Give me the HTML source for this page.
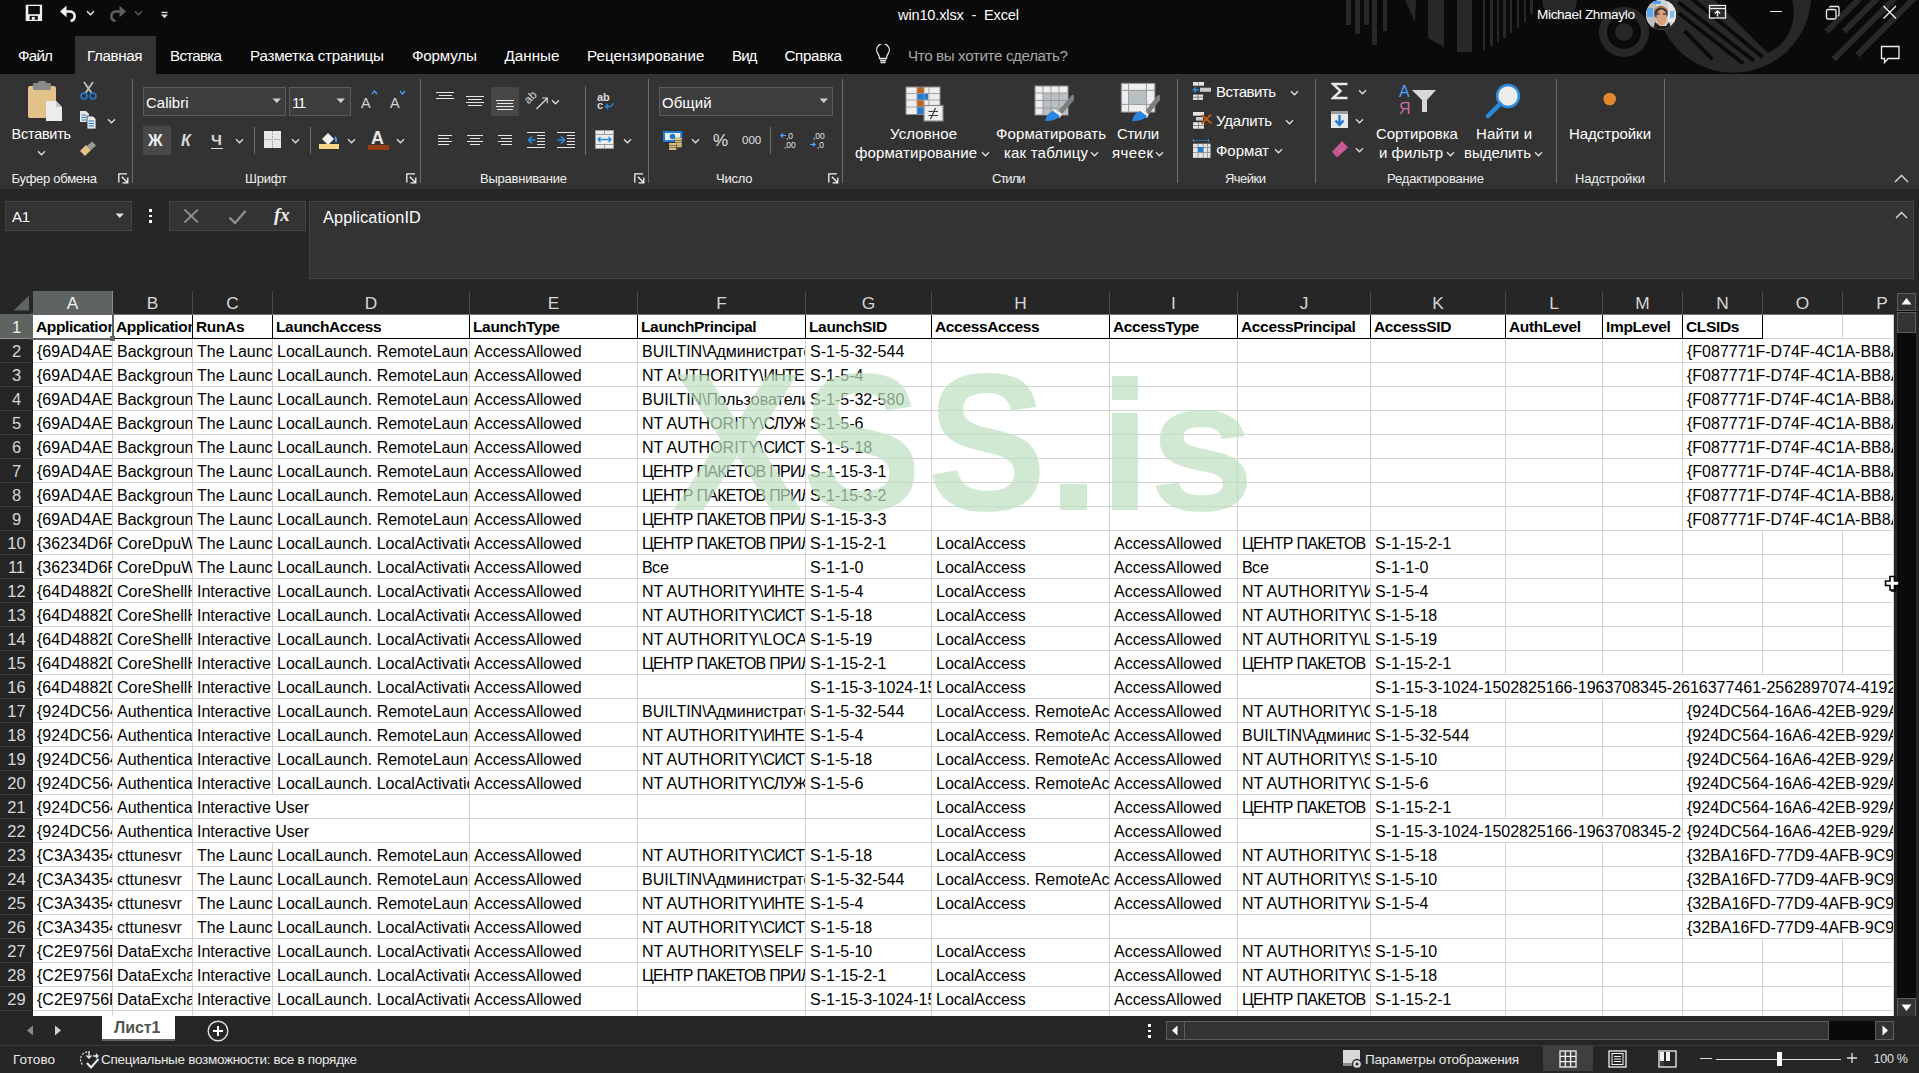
<!DOCTYPE html><html><head><meta charset="utf-8"><style>
html,body{margin:0;padding:0;width:1919px;height:1073px;overflow:hidden;background:#262626;}
body{position:relative;font-family:"Liberation Sans",sans-serif;}
.r{position:absolute;display:block;}
.t{position:absolute;white-space:pre;}
.c{position:absolute;overflow:hidden;white-space:pre;background:#fff;}
.cn{position:absolute;top:4.5px;font-size:16px;line-height:16px;color:#000;}
.cn i{font-style:normal;letter-spacing:-0.75px;}
.cb{position:absolute;top:4px;font-size:15.5px;line-height:16px;color:#000;font-weight:700;letter-spacing:-0.35px;}
</style></head><body><div class="r" style="left:0px;top:0px;width:1919px;height:74px;background:#0a0a0a;"></div><svg class="r" style="left:1330px;top:0px;" width="589" height="74" viewBox="0 0 589 74"><rect x="16" y="0" width="5" height="25" fill="#282828"/><rect x="25" y="0" width="5" height="34" fill="#282828"/><rect x="34" y="0" width="5" height="25" fill="#282828"/><rect x="42" y="0" width="5" height="45" fill="#282828"/><rect x="53" y="0" width="4" height="31" fill="#282828"/><rect x="127" y="0" width="15" height="52" fill="#282828"/><rect x="153" y="0" width="2" height="50" fill="#282828"/><rect x="160" y="0" width="3" height="46" fill="#282828"/><rect x="167" y="0" width="2" height="42" fill="#282828"/><rect x="173" y="0" width="3" height="38" fill="#282828"/><rect x="180" y="0" width="2" height="33" fill="#282828"/><rect x="187" y="0" width="2" height="28" fill="#282828"/><rect x="194" y="0" width="2" height="22" fill="#282828"/><rect x="200" y="0" width="3" height="14" fill="#282828"/><path d="M75 0 L86 0 L85 22 Z" fill="#282828"/><path d="M98 0 L114 0 L114 47 L98 38 Z" fill="#282828"/><path d="M212 0 L247 0 Q245 20 230 20 Q214 20 212 0 Z" fill="#282828"/><circle cx="294" cy="32" r="21" fill="none" stroke="#282828" stroke-width="8"/><circle cx="294" cy="32" r="9" fill="#282828"/><defs><clipPath id="holec"><path d="M370.29999999999995 -14.1 L620 -14.1 L620 84.7 L469.5 84.7 Z"/></clipPath></defs><circle cx="403.4000000000001" cy="-5.1" r="77.8" fill="#282828"/><circle cx="419.70000000000005" cy="12.7" r="44.2" fill="#0a0a0a" clip-path="url(#holec)"/><path d="M363.5999999999999 0 L432.79999999999995 57.3" stroke="#0a0a0a" stroke-width="3.8"/><path d="M348.20000000000005 2.1 L423.70000000000005 60.8" stroke="#0a0a0a" stroke-width="3.8"/><path d="M348.9000000000001 13.3 L413.20000000000005 63.6" stroke="#0a0a0a" stroke-width="3.8"/><path d="M354.5 30.8 L382.4000000000001 59.4" stroke="#0a0a0a" stroke-width="3.8"/><path d="M343.5999999999999 -16.6 L363.5999999999999 0" stroke="#0a0a0a" stroke-width="3.8"/><path d="M496.5999999999999 31.5 L586.5999999999999 -58.5" stroke="#282828" stroke-width="6"/><path d="M514 31.5 L604 -58.5" stroke="#282828" stroke-width="6"/><path d="M503.5999999999999 59.4 L593.5999999999999 -30.6" stroke="#282828" stroke-width="6"/><path d="M527.3 55.2 L617.3 -34.8" stroke="#282828" stroke-width="6"/></svg><svg class="r" style="left:24px;top:3px;" width="20" height="20" viewBox="0 0 20 20"><rect x="1.7" y="1.7" width="16.4" height="16.3" fill="#f0f0f0"/><rect x="4.3" y="3" width="11.5" height="8.2" fill="#0a0a0a"/><rect x="5.6" y="12.9" width="8.2" height="3.9" fill="#0a0a0a"/><rect x="7.8" y="13.9" width="3" height="2.9" fill="#f0f0f0"/></svg><svg class="r" style="left:58px;top:4px;" width="22" height="18" viewBox="0 0 22 18"><path d="M6 7.5 H12.5 A4.8 4.8 0 0 1 12.5 17" fill="none" stroke="#f0f0f0" stroke-width="2.6"/><path d="M2 7.5 L8.5 1.8 L8.5 13.2 Z" fill="#f0f0f0"/></svg><svg class="r" style="left:85.5px;top:8.5px;" width="9.0" height="7.0" viewBox="0 0 9.0 7.0"><path d="M1 2.25 L4.5 5.75 L8.0 2.25" fill="none" stroke="#f0f0f0" stroke-width="1.3"/></svg><svg class="r" style="left:106px;top:4px;" width="22" height="18" viewBox="0 0 22 18"><path d="M16 7.5 H9.5 A4.8 4.8 0 0 0 9.5 17" fill="none" stroke="#5e5e5e" stroke-width="2.6"/><path d="M20 7.5 L13.5 1.8 L13.5 13.2 Z" fill="#5e5e5e"/></svg><svg class="r" style="left:133.5px;top:8.5px;" width="9.0" height="7.0" viewBox="0 0 9.0 7.0"><path d="M1 2.25 L4.5 5.75 L8.0 2.25" fill="none" stroke="#5e5e5e" stroke-width="1.3"/></svg><svg class="r" style="left:160px;top:11px;" width="9" height="9" viewBox="0 0 9 9"><rect x="1.5" y="0.8" width="6" height="1.3" fill="#e0e0e0"/><path d="M1 3.5 H8 L4.5 7.3 Z" fill="#e0e0e0"/></svg><div class="t" style="left:898.0px;top:7.6px;font-size:14.6px;line-height:14.6px;color:#ffffff;letter-spacing:-0.16px;">win10.xlsx  -  Excel</div><div class="t" style="left:1537.0px;top:8.0px;font-size:13.6px;line-height:13.6px;color:#ffffff;letter-spacing:-0.34px;">Michael Zhmaylo</div><svg class="r" style="left:1646px;top:0px;" width="31" height="30" viewBox="0 0 31 30"><defs><clipPath id="av"><circle cx="15" cy="14.7" r="15"/></clipPath></defs><g clip-path="url(#av)"><rect width="31" height="30" fill="#d2d2d2"/><rect x="0" y="0" width="10" height="30" fill="#bdbdbd"/><rect x="22" y="2" width="9" height="20" fill="#e6e6e6"/><rect x="1" y="8" width="6" height="9" fill="#5aa9ef"/><rect x="7" y="1" width="8" height="3" fill="#4aa3ff"/><rect x="24" y="11" width="4" height="7" fill="#7cc0f5"/><path d="M7 30 L9 22 L14 26 L20 26 L23 22 L26 30 Z" fill="#1e1e1e"/><ellipse cx="15" cy="13" rx="6.8" ry="7" fill="#3c3a3a"/><path d="M8.5 10 Q15 3.5 21.5 10" fill="none" stroke="#c07a3a" stroke-width="1.2"/><ellipse cx="15.5" cy="17.5" rx="5.2" ry="8" fill="#d7a27c"/><path d="M10.5 14 H13.5 M17 14 H20" stroke="#5a3a4a" stroke-width="1.4"/></g></svg><svg class="r" style="left:1708px;top:4px;" width="20" height="16" viewBox="0 0 20 16"><rect x="1.5" y="1.5" width="16" height="12.5" fill="none" stroke="#f0f0f0" stroke-width="1.3"/><path d="M1.5 4.5 H17.5" stroke="#f0f0f0" stroke-width="1.3"/><path d="M9.5 12.5 V7 M6.8 9.5 L9.5 6.8 L12.2 9.5" fill="none" stroke="#f0f0f0" stroke-width="1.3"/></svg><div class="r" style="left:1770px;top:11px;width:12px;height:1.2px;background:#f0f0f0;"></div><svg class="r" style="left:1825px;top:5px;" width="16" height="15" viewBox="0 0 16 15"><rect x="1.5" y="4.5" width="9.5" height="9.5" rx="1.5" fill="none" stroke="#f0f0f0" stroke-width="1.3"/><path d="M4.5 2.5 Q4.5 1.5 6 1.5 H12.5 Q14 1.5 14 3 V9.5 Q14 11 12.5 11" fill="none" stroke="#f0f0f0" stroke-width="1.3"/></svg><svg class="r" style="left:1882px;top:5px;" width="16" height="15" viewBox="0 0 16 15"><path d="M1.5 1 L14 13.5 M14 1 L1.5 13.5" stroke="#f0f0f0" stroke-width="1.4"/></svg><svg class="r" style="left:1880px;top:45px;" width="21" height="20" viewBox="0 0 21 20"><path d="M1.5 1.5 H19 V13.5 H8 L4.5 17.5 V13.5 H1.5 Z" fill="none" stroke="#f0f0f0" stroke-width="1.3"/></svg><div class="r" style="left:75px;top:36px;width:81px;height:38px;background:#333333;"></div><div class="t" style="left:18.0px;top:47.8px;font-size:15.2px;line-height:15.2px;color:#ffffff;letter-spacing:-0.79px;">Файл</div><div class="t" style="left:87.0px;top:47.8px;font-size:15.2px;line-height:15.2px;color:#ffffff;letter-spacing:-0.39px;">Главная</div><div class="t" style="left:170.0px;top:47.8px;font-size:15.2px;line-height:15.2px;color:#ffffff;letter-spacing:-0.75px;">Вставка</div><div class="t" style="left:250.0px;top:47.8px;font-size:15.2px;line-height:15.2px;color:#ffffff;letter-spacing:-0.24px;">Разметка страницы</div><div class="t" style="left:412.0px;top:47.8px;font-size:15.2px;line-height:15.2px;color:#ffffff;letter-spacing:-0.19px;">Формулы</div><div class="t" style="left:504.5px;top:47.8px;font-size:15.2px;line-height:15.2px;color:#ffffff;letter-spacing:0.02px;">Данные</div><div class="t" style="left:587.0px;top:47.8px;font-size:15.2px;line-height:15.2px;color:#ffffff;letter-spacing:0.01px;">Рецензирование</div><div class="t" style="left:732.0px;top:47.8px;font-size:15.2px;line-height:15.2px;color:#ffffff;letter-spacing:-1.00px;">Вид</div><div class="t" style="left:784.5px;top:47.8px;font-size:15.2px;line-height:15.2px;color:#ffffff;letter-spacing:-0.35px;">Справка</div><svg class="r" style="left:874px;top:44px;" width="18" height="22" viewBox="0 0 18 22"><path d="M5.5 14.5 Q5.5 11.5 3.8 9.5 A6.3 6.3 0 1 1 14.2 9.5 Q12.5 11.5 12.5 14.5 Z" fill="none" stroke="#e6e6e6" stroke-width="1.3"/><path d="M6 16.5 H12 M6.5 18.5 H11.5" stroke="#e6e6e6" stroke-width="1.3"/></svg><div class="t" style="left:908.0px;top:47.8px;font-size:15.2px;line-height:15.2px;color:#a8a8a8;letter-spacing:-0.38px;">Что вы хотите сделать?</div><div class="r" style="left:0px;top:74px;width:1919px;height:115px;background:#333333;"></div><div class="r" style="left:132px;top:79px;width:1px;height:104px;background:#6a6f6b;"></div><div class="r" style="left:420px;top:79px;width:1px;height:104px;background:#6a6f6b;"></div><div class="r" style="left:648px;top:79px;width:1px;height:104px;background:#6a6f6b;"></div><div class="r" style="left:842px;top:79px;width:1px;height:104px;background:#6a6f6b;"></div><div class="r" style="left:1177px;top:79px;width:1px;height:104px;background:#6a6f6b;"></div><div class="r" style="left:1315px;top:79px;width:1px;height:104px;background:#6a6f6b;"></div><div class="r" style="left:1556px;top:79px;width:1px;height:104px;background:#6a6f6b;"></div><div class="r" style="left:1664px;top:79px;width:1px;height:104px;background:#6a6f6b;"></div><div class="t" style="left:11.6px;top:171.5px;font-size:13px;line-height:13px;color:#efefef;letter-spacing:-0.27px;">Буфер обмена</div><div class="t" style="left:245.0px;top:171.5px;font-size:13px;line-height:13px;color:#efefef;letter-spacing:-0.19px;">Шрифт</div><div class="t" style="left:480.0px;top:171.5px;font-size:13px;line-height:13px;color:#efefef;letter-spacing:-0.23px;">Выравнивание</div><div class="t" style="left:716.0px;top:171.5px;font-size:13px;line-height:13px;color:#efefef;letter-spacing:-0.22px;">Число</div><div class="t" style="left:992.0px;top:171.5px;font-size:13px;line-height:13px;color:#efefef;letter-spacing:-0.99px;">Стили</div><div class="t" style="left:1225.0px;top:171.5px;font-size:13px;line-height:13px;color:#efefef;letter-spacing:-0.52px;">Ячейки</div><div class="t" style="left:1387.0px;top:171.5px;font-size:13px;line-height:13px;color:#efefef;letter-spacing:-0.16px;">Редактирование</div><div class="t" style="left:1575.0px;top:171.5px;font-size:13px;line-height:13px;color:#efefef;letter-spacing:-0.15px;">Надстройки</div><svg class="r" style="left:117px;top:172px;" width="13" height="13" viewBox="0 0 13 13"><path d="M1.8 10.5 V1.8 H10" stroke="#f4f4f4" stroke-width="1.3" fill="none"/><path d="M4.8 4.8 L10.8 10.8 M10.8 5.6 V10.8 H5.6" stroke="#f4f4f4" stroke-width="1.3" fill="none"/></svg><svg class="r" style="left:405px;top:172px;" width="13" height="13" viewBox="0 0 13 13"><path d="M1.8 10.5 V1.8 H10" stroke="#f4f4f4" stroke-width="1.3" fill="none"/><path d="M4.8 4.8 L10.8 10.8 M10.8 5.6 V10.8 H5.6" stroke="#f4f4f4" stroke-width="1.3" fill="none"/></svg><svg class="r" style="left:633px;top:172px;" width="13" height="13" viewBox="0 0 13 13"><path d="M1.8 10.5 V1.8 H10" stroke="#f4f4f4" stroke-width="1.3" fill="none"/><path d="M4.8 4.8 L10.8 10.8 M10.8 5.6 V10.8 H5.6" stroke="#f4f4f4" stroke-width="1.3" fill="none"/></svg><svg class="r" style="left:827px;top:172px;" width="13" height="13" viewBox="0 0 13 13"><path d="M1.8 10.5 V1.8 H10" stroke="#f4f4f4" stroke-width="1.3" fill="none"/><path d="M4.8 4.8 L10.8 10.8 M10.8 5.6 V10.8 H5.6" stroke="#f4f4f4" stroke-width="1.3" fill="none"/></svg><svg class="r" style="left:1894px;top:174px;" width="15" height="9" viewBox="0 0 15 9"><path d="M1 8 L7.5 1.5 L14 8" fill="none" stroke="#e0e0e0" stroke-width="1.3"/></svg><svg class="r" style="left:26px;top:81px;" width="38" height="42" viewBox="0 0 38 42"><rect x="2" y="5" width="28" height="32" rx="2" fill="#e3c28a"/><rect x="7" y="2" width="18" height="7" rx="1.5" fill="#8a8a8a"/><rect x="12" y="0" width="8" height="4" rx="1.5" fill="#8a8a8a"/><path d="M20 20 H30 L36 26 V40 H20 Z" fill="#ececec"/><path d="M30 20 V26 H36" fill="#c8c8c8"/></svg><div class="t" style="left:11.6px;top:126.5px;font-size:14.4px;line-height:14.4px;color:#ffffff;letter-spacing:-0.22px;">Вставить</div><svg class="r" style="left:37.0px;top:148.5px;" width="9.0" height="7.0" viewBox="0 0 9.0 7.0"><path d="M1 2.25 L4.5 5.75 L8.0 2.25" fill="none" stroke="#e0e0e0" stroke-width="1.3"/></svg><svg class="r" style="left:79px;top:81px;" width="19" height="20" viewBox="0 0 19 20"><path d="M5 1 L12.5 12 M14 1 L6.5 12" stroke="#bdbdbd" stroke-width="1.8"/><circle cx="5" cy="15" r="3" fill="none" stroke="#1e7bd6" stroke-width="1.6"/><circle cx="14" cy="15" r="3" fill="none" stroke="#1e7bd6" stroke-width="1.6"/></svg><svg class="r" style="left:79px;top:110px;" width="19" height="20" viewBox="0 0 19 20"><path d="M1 1 H7 L10 4 V12 H1 Z" fill="#e8e8e8"/><path d="M8 6 H14 L17 9 V19 H8 Z" fill="#e8e8e8" stroke="#333" stroke-width="0.8"/><path d="M2.5 5 H7 M2.5 7.5 H7 M2.5 10 H7 M9.5 11 H15 M9.5 13.5 H15 M9.5 16 H15" stroke="#1e7bd6" stroke-width="1"/></svg><svg class="r" style="left:106.5px;top:116.5px;" width="9.0" height="7.0" viewBox="0 0 9.0 7.0"><path d="M1 2.25 L4.5 5.75 L8.0 2.25" fill="none" stroke="#e0e0e0" stroke-width="1.3"/></svg><svg class="r" style="left:79px;top:140px;" width="19" height="18" viewBox="0 0 19 18"><path d="M1 11 L7 5 L12 10 L6 16 Z" fill="#e3c28a"/><path d="M8 6 L13 1.5 L17 5.5 L12 10 Z" fill="#9a9a9a"/></svg><div class="r" style="left:143px;top:87px;width:143px;height:29px;background:#3d3d3d;box-sizing:border-box;border:1px solid #5c5c5c;"></div><div class="t" style="left:146.0px;top:94.8px;font-size:15px;line-height:15px;color:#ffffff;">Calibri</div><svg class="r" style="left:272px;top:98px;" width="10" height="6" viewBox="0 0 10 6"><path d="M0.5 0.5 H9 L4.75 5 Z" fill="#d0d0d0"/></svg><div class="r" style="left:289px;top:87px;width:62px;height:29px;background:#3d3d3d;box-sizing:border-box;border:1px solid #5c5c5c;"></div><div class="t" style="left:292.0px;top:94.8px;font-size:15px;line-height:15px;color:#ffffff;letter-spacing:-1.57px;">11</div><svg class="r" style="left:336px;top:98px;" width="10" height="6" viewBox="0 0 10 6"><path d="M0.5 0.5 H9 L4.75 5 Z" fill="#d0d0d0"/></svg><div class="t" style="left:361.0px;top:95.7px;font-size:14.5px;line-height:14.5px;color:#d6d6d6;">A</div><svg class="r" style="left:371px;top:90px;" width="7" height="5" viewBox="0 0 7 5"><path d="M1 4 L3.5 1 L6 4" stroke="#4aa3ff" stroke-width="1.2" fill="none"/></svg><div class="t" style="left:390.0px;top:95.7px;font-size:14.5px;line-height:14.5px;color:#d6d6d6;">A</div><svg class="r" style="left:399px;top:90px;" width="7" height="5" viewBox="0 0 7 5"><path d="M1 1 L3.5 4 L6 1" stroke="#4aa3ff" stroke-width="1.2" fill="none"/></svg><div class="r" style="left:143px;top:126px;width:28px;height:29px;background:#484848;"></div><div class="t" style="left:148.0px;top:132.5px;font-size:16px;line-height:16px;color:#f0f0f0;font-weight:700;">Ж</div><div class="t" style="left:181.0px;top:132.5px;font-size:16px;line-height:16px;color:#d8d8d8;font-weight:700;font-style:italic;">К</div><div class="t" style="left:211.0px;top:131.9px;font-size:15.5px;line-height:15.5px;color:#d8d8d8;font-weight:700;">Ч</div><div class="r" style="left:211px;top:148px;width:12px;height:1px;background:#d8d8d8;"></div><svg class="r" style="left:234.5px;top:136.5px;" width="9.0" height="7.0" viewBox="0 0 9.0 7.0"><path d="M1 2.25 L4.5 5.75 L8.0 2.25" fill="none" stroke="#e0e0e0" stroke-width="1.3"/></svg><div class="r" style="left:254px;top:127px;width:1px;height:27px;background:#6a6f6b;"></div><svg class="r" style="left:263px;top:130px;" width="19" height="19" viewBox="0 0 19 19"><rect x="1" y="1" width="17" height="17" fill="#e8e8e8"/><path d="M9.5 1 V18 M1 9.5 H18" stroke="#9a9a9a" stroke-width="1" stroke-dasharray="1.5 1"/></svg><svg class="r" style="left:290.5px;top:136.5px;" width="9.0" height="7.0" viewBox="0 0 9.0 7.0"><path d="M1 2.25 L4.5 5.75 L8.0 2.25" fill="none" stroke="#e0e0e0" stroke-width="1.3"/></svg><div class="r" style="left:310px;top:127px;width:1px;height:27px;background:#6a6f6b;"></div><svg class="r" style="left:318px;top:128px;" width="22" height="22" viewBox="0 0 22 22"><path d="M4 11 L10 5 L16 11 L10 17 Z" fill="#f0f0f0"/><path d="M17 9 Q19 12 17.5 14" stroke="#4aa3ff" stroke-width="1.8" fill="none"/><rect x="1" y="16" width="20" height="5" fill="#f5d58a"/></svg><svg class="r" style="left:346.5px;top:136.5px;" width="9.0" height="7.0" viewBox="0 0 9.0 7.0"><path d="M1 2.25 L4.5 5.75 L8.0 2.25" fill="none" stroke="#e0e0e0" stroke-width="1.3"/></svg><div class="t" style="left:371.0px;top:128.8px;font-size:18px;line-height:18px;color:#e6e6e6;font-weight:700;">A</div><div class="r" style="left:367.5px;top:145px;width:21px;height:5px;background:#933d12;"></div><svg class="r" style="left:395.5px;top:136.5px;" width="9.0" height="7.0" viewBox="0 0 9.0 7.0"><path d="M1 2.25 L4.5 5.75 L8.0 2.25" fill="none" stroke="#e0e0e0" stroke-width="1.3"/></svg><div class="r" style="left:436px;top:92px;width:18px;height:1px;background:#e6e6e6;"></div><div class="r" style="left:439px;top:95px;width:13px;height:1px;background:#e6e6e6;"></div><div class="r" style="left:436px;top:98px;width:18px;height:1px;background:#e6e6e6;"></div><div class="r" style="left:466px;top:96px;width:18px;height:1px;background:#e6e6e6;"></div><div class="r" style="left:468px;top:99px;width:14px;height:1px;background:#e6e6e6;"></div><div class="r" style="left:466px;top:102px;width:18px;height:1px;background:#e6e6e6;"></div><div class="r" style="left:468px;top:105px;width:14px;height:1px;background:#e6e6e6;"></div><div class="r" style="left:491px;top:87px;width:28px;height:29px;background:#474747;"></div><div class="r" style="left:496px;top:100px;width:18px;height:1px;background:#e6e6e6;"></div><div class="r" style="left:497px;top:103px;width:16px;height:1px;background:#e6e6e6;"></div><div class="r" style="left:496px;top:106px;width:18px;height:1px;background:#e6e6e6;"></div><div class="r" style="left:497px;top:109px;width:16px;height:1px;background:#e6e6e6;"></div><svg class="r" style="left:525px;top:89px;" width="24" height="22" viewBox="0 0 24 22"><text x="0" y="0" font-size="11.5" fill="#dcdcdc" font-family="Liberation Sans" transform="translate(3.5 15.5) rotate(-45)">ab</text><path d="M11.5 20 L22 9.5 M17 9 H22.3 V14.3" stroke="#dcdcdc" stroke-width="1.2" fill="none"/></svg><svg class="r" style="left:550.5px;top:97.5px;" width="9.0" height="7.0" viewBox="0 0 9.0 7.0"><path d="M1 2.25 L4.5 5.75 L8.0 2.25" fill="none" stroke="#e0e0e0" stroke-width="1.3"/></svg><div class="r" style="left:585px;top:86px;width:1px;height:69px;background:#6a6f6b;"></div><svg class="r" style="left:596px;top:90px;" width="20" height="21" viewBox="0 0 20 21"><text x="1" y="10.5" font-size="11" fill="#dcdcdc" font-family="Liberation Sans" font-weight="700">ab</text><text x="1" y="19" font-size="11" fill="#dcdcdc" font-family="Liberation Sans" font-weight="700">c</text><path d="M17 13 Q17 16.5 13 16.5 H9.5 M12 14 L9.5 16.5 L12 19" stroke="#2a8ae0" stroke-width="1.3" fill="none"/></svg><div class="r" style="left:438px;top:135px;width:14px;height:1px;background:#e6e6e6;"></div><div class="r" style="left:438px;top:138px;width:11px;height:1px;background:#e6e6e6;"></div><div class="r" style="left:438px;top:141px;width:14px;height:1px;background:#e6e6e6;"></div><div class="r" style="left:438px;top:144px;width:11px;height:1px;background:#e6e6e6;"></div><div class="r" style="left:467px;top:135px;width:16px;height:1px;background:#e6e6e6;"></div><div class="r" style="left:470px;top:138px;width:10px;height:1px;background:#e6e6e6;"></div><div class="r" style="left:467px;top:141px;width:16px;height:1px;background:#e6e6e6;"></div><div class="r" style="left:470px;top:144px;width:10px;height:1px;background:#e6e6e6;"></div><div class="r" style="left:498px;top:135px;width:14px;height:1px;background:#e6e6e6;"></div><div class="r" style="left:501px;top:138px;width:11px;height:1px;background:#e6e6e6;"></div><div class="r" style="left:498px;top:141px;width:14px;height:1px;background:#e6e6e6;"></div><div class="r" style="left:501px;top:144px;width:11px;height:1px;background:#e6e6e6;"></div><div class="r" style="left:527px;top:132px;width:18px;height:1px;background:#e6e6e6;"></div><div class="r" style="left:527px;top:147px;width:18px;height:1px;background:#e6e6e6;"></div><div class="r" style="left:537px;top:135px;width:8px;height:1px;background:#e6e6e6;"></div><div class="r" style="left:537px;top:138px;width:8px;height:1px;background:#e6e6e6;"></div><div class="r" style="left:537px;top:141px;width:8px;height:1px;background:#e6e6e6;"></div><div class="r" style="left:537px;top:144px;width:8px;height:1px;background:#e6e6e6;"></div><svg class="r" style="left:527px;top:135px;" width="10" height="10" viewBox="0 0 10 10"><path d="M1.5 5 H8.5 M5 1.5 L1.5 5 L5 8.5" stroke="#2a8ae0" stroke-width="1.6" fill="none"/></svg><div class="r" style="left:557px;top:132px;width:18px;height:1px;background:#e6e6e6;"></div><div class="r" style="left:557px;top:147px;width:18px;height:1px;background:#e6e6e6;"></div><div class="r" style="left:567px;top:135px;width:8px;height:1px;background:#e6e6e6;"></div><div class="r" style="left:567px;top:138px;width:8px;height:1px;background:#e6e6e6;"></div><div class="r" style="left:567px;top:141px;width:8px;height:1px;background:#e6e6e6;"></div><div class="r" style="left:567px;top:144px;width:8px;height:1px;background:#e6e6e6;"></div><svg class="r" style="left:557px;top:135px;" width="10" height="10" viewBox="0 0 10 10"><path d="M0.5 5 H7.5 M4 1.5 L7.5 5 L4 8.5" stroke="#2a8ae0" stroke-width="1.6" fill="none"/></svg><svg class="r" style="left:594px;top:129px;" width="21" height="21" viewBox="0 0 21 21"><rect x="1.5" y="1.5" width="18" height="18" fill="#ececec" stroke="#9a9a9a" stroke-width="1"/><path d="M10.5 1.5 V5.5 M10.5 15.5 V19.5 M1.5 5.5 H19.5 M1.5 15.5 H19.5" stroke="#9a9a9a" stroke-width="1"/><path d="M4 10.5 H17 M6.5 8 L4 10.5 L6.5 13 M14.5 8 L17 10.5 L14.5 13" stroke="#2a8ae0" stroke-width="1.4" fill="none"/></svg><svg class="r" style="left:622.5px;top:136.5px;" width="9.0" height="7.0" viewBox="0 0 9.0 7.0"><path d="M1 2.25 L4.5 5.75 L8.0 2.25" fill="none" stroke="#e0e0e0" stroke-width="1.3"/></svg><div class="r" style="left:659px;top:87px;width:174px;height:29px;background:#3d3d3d;box-sizing:border-box;border:1px solid #5c5c5c;"></div><div class="t" style="left:662.0px;top:94.8px;font-size:15px;line-height:15px;color:#ffffff;letter-spacing:0.04px;">Общий</div><svg class="r" style="left:819px;top:98px;" width="10" height="6" viewBox="0 0 10 6"><path d="M0.5 0.5 H9 L4.75 5 Z" fill="#d0d0d0"/></svg><svg class="r" style="left:662px;top:129px;" width="22" height="22" viewBox="0 0 22 22"><rect x="1" y="2" width="19.3" height="11" fill="#1e7bd6"/><rect x="3" y="4" width="15.3" height="7" fill="#f0f0f0"/><circle cx="10.5" cy="7.5" r="2.8" fill="#1e7bd6"/><rect x="12.3" y="8.8" width="8" height="9" rx="2" fill="#333333"/><path d="M12.8 10 H19.8 M12.8 12.5 H19.8 M12.8 15 H19.8 M12.8 17.3 H19.8" stroke="#d9bd7f" stroke-width="2"/><rect x="6.4" y="13.5" width="8.4" height="8" rx="2" fill="#333333"/><path d="M7 15 H14.3 M7 17.5 H14.3 M7 20 H14.3" stroke="#d9bd7f" stroke-width="2"/></svg><svg class="r" style="left:690.5px;top:136.5px;" width="9.0" height="7.0" viewBox="0 0 9.0 7.0"><path d="M1 2.25 L4.5 5.75 L8.0 2.25" fill="none" stroke="#e0e0e0" stroke-width="1.3"/></svg><div class="t" style="left:713.0px;top:131.6px;font-size:17px;line-height:17px;color:#e0e0e0;">%</div><div class="t" style="left:742.0px;top:135.3px;font-size:11.5px;line-height:11.5px;color:#e0e0e0;">000</div><div class="r" style="left:770px;top:127px;width:1px;height:27px;background:#6a6f6b;"></div><svg class="r" style="left:780px;top:131px;" width="18" height="18" viewBox="0 0 18 18"><text x="6" y="8" font-size="8.5" fill="#e0e0e0" font-family="Liberation Sans">,0</text><text x="4" y="17" font-size="8.5" fill="#e0e0e0" font-family="Liberation Sans">,00</text><path d="M1 4.5 H6 M3 2.5 L1 4.5 L3 6.5" stroke="#4aa3ff" stroke-width="1.2" fill="none"/></svg><svg class="r" style="left:809px;top:131px;" width="18" height="18" viewBox="0 0 18 18"><text x="4" y="8" font-size="8.5" fill="#e0e0e0" font-family="Liberation Sans">,00</text><text x="8" y="17" font-size="8.5" fill="#e0e0e0" font-family="Liberation Sans">,0</text><path d="M1 13.5 H6 M4 11.5 L6 13.5 L4 15.5" stroke="#4aa3ff" stroke-width="1.2" fill="none"/></svg><svg class="r" style="left:904px;top:85px;" width="42" height="38" viewBox="0 0 42 38"><rect x="2" y="2" width="34" height="27.5" fill="#eeeeee"/><rect x="13" y="2" width="7" height="6.5" fill="#c0641f"/><rect x="13" y="8.5" width="11" height="6.5" fill="#1e7bd6"/><rect x="13" y="15" width="7" height="7" fill="#c0641f"/><rect x="13" y="22" width="7" height="7.5" fill="#1e7bd6"/><path d="M2 8.5 H36 M2 15 H36 M2 22 H36 M13 2 V29.5 M20 2 V29.5 M25 2 V29.5" stroke="#9c9c9c" stroke-width="0.9"/><rect x="2" y="2" width="34" height="27.5" fill="none" stroke="#8a8a8a" stroke-width="1"/><rect x="20" y="20.5" width="19" height="15.5" fill="#eeeeee" stroke="#8a8a8a" stroke-width="1.2"/><path d="M24.5 26.5 H34 M24.5 30.5 H34 M31.5 23 L26.5 34" stroke="#3a3a3a" stroke-width="1.2"/></svg><div class="t" style="left:890.0px;top:125.8px;font-size:15px;line-height:15px;color:#ffffff;letter-spacing:0.11px;">Условное</div><div class="t" style="left:855.0px;top:145.3px;font-size:15px;line-height:15px;color:#ffffff;letter-spacing:0.12px;">форматирование</div><svg class="r" style="left:980.5px;top:149.5px;" width="9.0" height="7.0" viewBox="0 0 9.0 7.0"><path d="M1 2.25 L4.5 5.75 L8.0 2.25" fill="none" stroke="#e0e0e0" stroke-width="1.3"/></svg><svg class="r" style="left:1033px;top:83px;" width="44" height="40" viewBox="0 0 44 40"><rect x="2" y="3" width="33" height="29" fill="#eeeeee" stroke="#8a8a8a" stroke-width="1"/><rect x="10" y="10" width="25" height="22" fill="#b9c0c4"/><path d="M2 10 H35 M2 17.5 H35 M2 25 H35 M10 3 V32 M18 3 V32 M26 3 V32" stroke="#9a9a9a" stroke-width="1"/><path d="M26 27 L38 13 Q40 10 41 13 L41 17 L29 31 Z" fill="#7c7f7e"/><path d="M21 26 L29 31 L27 35 L20 30 Z" fill="#f0f0f0"/><path d="M12 38 Q14 30 20 28 L27 33 Q24 38 12 38 Z" fill="#2a86e0"/></svg><div class="t" style="left:996.0px;top:125.8px;font-size:15px;line-height:15px;color:#ffffff;letter-spacing:0.10px;">Форматировать</div><div class="t" style="left:1004.0px;top:145.3px;font-size:15px;line-height:15px;color:#ffffff;letter-spacing:0.19px;">как таблицу</div><svg class="r" style="left:1089.5px;top:149.5px;" width="9.0" height="7.0" viewBox="0 0 9.0 7.0"><path d="M1 2.25 L4.5 5.75 L8.0 2.25" fill="none" stroke="#e0e0e0" stroke-width="1.3"/></svg><svg class="r" style="left:1119px;top:81px;" width="44" height="42" viewBox="0 0 44 42"><rect x="2.3" y="2.3" width="33.6" height="28.8" fill="#eeeeee" stroke="#8a8a8a" stroke-width="1"/><rect x="9.6" y="9.4" width="17.8" height="14" fill="#b9c0c4"/><path d="M2.3 9.4 H35.9 M2.3 23.4 H35.9 M9.6 2.3 V31.1 M27.4 2.3 V31.1" stroke="#9a9a9a" stroke-width="1"/><path d="M27 29 L38 15 Q40 12 41 15 L41 19 L30 33 Z" fill="#7c7f7e"/><path d="M22 28 L30 33 L28 37 L21 32 Z" fill="#f0f0f0"/><path d="M13 40 Q15 32 21 30 L28 35 Q25 40 13 40 Z" fill="#2a86e0"/></svg><div class="t" style="left:1117.0px;top:125.8px;font-size:15px;line-height:15px;color:#ffffff;letter-spacing:-0.30px;">Стили</div><div class="t" style="left:1112.0px;top:145.3px;font-size:15px;line-height:15px;color:#ffffff;letter-spacing:0.45px;">ячеек</div><svg class="r" style="left:1154.5px;top:149.5px;" width="9.0" height="7.0" viewBox="0 0 9.0 7.0"><path d="M1 2.25 L4.5 5.75 L8.0 2.25" fill="none" stroke="#e0e0e0" stroke-width="1.3"/></svg><svg class="r" style="left:1192px;top:81px;" width="21" height="21" viewBox="0 0 21 21"><rect x="1" y="1" width="11" height="3.7" fill="#e4e4e4"/><path d="M6.5 1 V4.7" stroke="#9a9a9a" stroke-width="1"/><rect x="8" y="6.7" width="11" height="4.1" fill="#c4c9cc"/><path d="M1.5 8.7 H7 M4 6.2 L1.5 8.7 L4 11.2" stroke="#2a8ae0" stroke-width="1.5" fill="none"/><rect x="1" y="13.6" width="10" height="5.3" fill="#e4e4e4"/><path d="M6 13.6 V18.9 M1 16.2 H11" stroke="#7a7a7a" stroke-width="1"/></svg><div class="t" style="left:1216.0px;top:84.3px;font-size:15px;line-height:15px;color:#ffffff;letter-spacing:-0.51px;">Вставить</div><svg class="r" style="left:1289.5px;top:88.5px;" width="9.0" height="7.0" viewBox="0 0 9.0 7.0"><path d="M1 2.25 L4.5 5.75 L8.0 2.25" fill="none" stroke="#e0e0e0" stroke-width="1.3"/></svg><svg class="r" style="left:1192px;top:110px;" width="21" height="21" viewBox="0 0 21 21"><rect x="1" y="2" width="11" height="3.7" fill="#e4e4e4"/><rect x="4" y="7" width="7" height="3.6" fill="#c4c9cc"/><rect x="1" y="12.2" width="11" height="6.5" fill="#e4e4e4"/><path d="M1 15.5 H12 M6.5 12.2 V18.7" stroke="#8a8a8a" stroke-width="1"/><path d="M9.5 5 L19.5 13.5 M19 4.5 L9.5 13.8" stroke="#c05a10" stroke-width="1.9"/></svg><div class="t" style="left:1216.0px;top:113.3px;font-size:15px;line-height:15px;color:#ffffff;letter-spacing:-0.21px;">Удалить</div><svg class="r" style="left:1284.5px;top:117.5px;" width="9.0" height="7.0" viewBox="0 0 9.0 7.0"><path d="M1 2.25 L4.5 5.75 L8.0 2.25" fill="none" stroke="#e0e0e0" stroke-width="1.3"/></svg><svg class="r" style="left:1192px;top:138px;" width="21" height="21" viewBox="0 0 21 21"><path d="M1.5 1 V4 M16.5 1 V4" stroke="#2a8ae0" stroke-width="1"/><path d="M2 2.5 H16" stroke="#2a8ae0" stroke-width="1" stroke-dasharray="1.5 1"/><rect x="1" y="5.7" width="17.5" height="14.2" fill="#e4e4e4"/><path d="M1 9.5 H18.5 M1 14.5 H18.5 M6 5.7 V19.9 M11.2 5.7 V19.9 M15.5 5.7 V19.9" stroke="#9a9a9a" stroke-width="1"/><rect x="6" y="9" width="5.2" height="5.2" fill="#1e7bd6"/></svg><div class="t" style="left:1216.0px;top:142.8px;font-size:15px;line-height:15px;color:#ffffff;letter-spacing:-0.06px;">Формат</div><svg class="r" style="left:1273.5px;top:146.5px;" width="9.0" height="7.0" viewBox="0 0 9.0 7.0"><path d="M1 2.25 L4.5 5.75 L8.0 2.25" fill="none" stroke="#e0e0e0" stroke-width="1.3"/></svg><svg class="r" style="left:1331px;top:82px;" width="20" height="18" viewBox="0 0 20 18"><path d="M16.5 2 H2 L9.5 9 L2 16 H16.5" fill="none" stroke="#e8e8e8" stroke-width="2.4"/></svg><svg class="r" style="left:1357.5px;top:87.5px;" width="9.0" height="7.0" viewBox="0 0 9.0 7.0"><path d="M1 2.25 L4.5 5.75 L8.0 2.25" fill="none" stroke="#e0e0e0" stroke-width="1.3"/></svg><svg class="r" style="left:1330px;top:110px;" width="19" height="19" viewBox="0 0 19 19"><rect x="1" y="1" width="17" height="17" fill="#e8e8e8"/><rect x="1" y="1" width="17" height="3" fill="#9a9a9a"/><path d="M9.5 5 V15 M5.5 10.5 L9.5 15 L13.5 10.5" stroke="#1e7bd6" stroke-width="2.4" fill="none"/></svg><svg class="r" style="left:1354.5px;top:116.5px;" width="9.0" height="7.0" viewBox="0 0 9.0 7.0"><path d="M1 2.25 L4.5 5.75 L8.0 2.25" fill="none" stroke="#e0e0e0" stroke-width="1.3"/></svg><svg class="r" style="left:1330px;top:139px;" width="20" height="20" viewBox="0 0 20 20"><path d="M2 12.8 L12 2.1 L18.2 8.4 L7 18.4 Z" fill="#c4568f"/><path d="M6.5 11 L12.5 5 M9 13 L14.5 7.5" stroke="#e9a3c6" stroke-width="0.8" stroke-dasharray="1 1.3"/></svg><svg class="r" style="left:1354.5px;top:145.5px;" width="9.0" height="7.0" viewBox="0 0 9.0 7.0"><path d="M1 2.25 L4.5 5.75 L8.0 2.25" fill="none" stroke="#e0e0e0" stroke-width="1.3"/></svg><svg class="r" style="left:1398px;top:82px;" width="40" height="36" viewBox="0 0 40 36"><text x="1" y="15" font-size="16" fill="#4aa3ff" font-family="Liberation Sans">A</text><text x="1" y="32" font-size="16" fill="#c46f9a" font-family="Liberation Sans">Я</text><path d="M14 8 H38 L29 18 V30 H24 V18 Z" fill="#d8d8d8"/></svg><div class="t" style="left:1376.0px;top:126.0px;font-size:15px;line-height:15px;color:#ffffff;letter-spacing:-0.04px;">Сортировка</div><div class="t" style="left:1379.0px;top:145.3px;font-size:15px;line-height:15px;color:#ffffff;letter-spacing:0.02px;">и фильтр</div><svg class="r" style="left:1445.5px;top:149.5px;" width="9.0" height="7.0" viewBox="0 0 9.0 7.0"><path d="M1 2.25 L4.5 5.75 L8.0 2.25" fill="none" stroke="#e0e0e0" stroke-width="1.3"/></svg><svg class="r" style="left:1485px;top:82px;" width="38" height="38" viewBox="0 0 38 38"><circle cx="23" cy="14" r="11" fill="#ececec" stroke="#2a8ae0" stroke-width="2.5"/><path d="M15 22 L3 34" stroke="#2a8ae0" stroke-width="4.5" stroke-linecap="round"/></svg><div class="t" style="left:1476.0px;top:126.0px;font-size:15px;line-height:15px;color:#ffffff;letter-spacing:0.11px;">Найти и</div><div class="t" style="left:1464.0px;top:145.3px;font-size:15px;line-height:15px;color:#ffffff;letter-spacing:-0.02px;">выделить</div><svg class="r" style="left:1533.5px;top:149.5px;" width="9.0" height="7.0" viewBox="0 0 9.0 7.0"><path d="M1 2.25 L4.5 5.75 L8.0 2.25" fill="none" stroke="#e0e0e0" stroke-width="1.3"/></svg><svg class="r" style="left:1602px;top:92px;" width="16" height="16" viewBox="0 0 16 16"><circle cx="7.7" cy="7" r="6.3" fill="#e0892d"/></svg><div class="t" style="left:1569.0px;top:126.0px;font-size:15px;line-height:15px;color:#ffffff;letter-spacing:-0.03px;">Надстройки</div><div class="r" style="left:0px;top:189px;width:1919px;height:102px;background:#262626;"></div><div class="r" style="left:5px;top:201px;width:127px;height:30px;background:#333333;box-sizing:border-box;border:1px solid #444444;"></div><div class="t" style="left:12.0px;top:209.1px;font-size:15px;line-height:15px;color:#ffffff;letter-spacing:-0.35px;">A1</div><svg class="r" style="left:115px;top:213px;" width="10" height="6" viewBox="0 0 10 6"><path d="M0.5 0.5 H9 L4.75 5 Z" fill="#e0e0e0"/></svg><div class="r" style="left:149px;top:209px;width:3px;height:2.6px;background:#ffffff;"></div><div class="r" style="left:149px;top:214.5px;width:3px;height:2.6px;background:#ffffff;"></div><div class="r" style="left:149px;top:220px;width:3px;height:2.6px;background:#ffffff;"></div><div class="r" style="left:169px;top:201px;width:137px;height:30px;background:#333333;box-sizing:border-box;border:1px solid #444444;"></div><svg class="r" style="left:183px;top:208px;" width="17" height="16" viewBox="0 0 17 16"><path d="M1.5 1.5 L15 14.5 M15 1.5 L1.5 14.5" stroke="#8a918b" stroke-width="1.8"/></svg><svg class="r" style="left:228px;top:209px;" width="19" height="16" viewBox="0 0 19 16"><path d="M1.5 8.5 L7 14 L17.5 2" stroke="#8a918b" stroke-width="2.4" fill="none"/></svg><div class="t" style="left:274.0px;top:205.4px;font-size:19px;line-height:19px;color:#ececec;font-weight:700;font-family:'Liberation Serif',serif;font-style:italic;">fx</div><div class="r" style="left:309px;top:201px;width:1605px;height:78px;background:#333333;box-sizing:border-box;border:1px solid #444444;"></div><div class="t" style="left:323.0px;top:208.7px;font-size:16.3px;line-height:16.3px;color:#ffffff;letter-spacing:0.16px;">ApplicationID</div><svg class="r" style="left:1895px;top:211px;" width="13" height="8" viewBox="0 0 13 8"><path d="M1 7 L6.5 1.5 L12 7" fill="none" stroke="#e0e0e0" stroke-width="1.3"/></svg><div class="r" style="left:0px;top:291px;width:1894px;height:23px;background:#262626;"></div><div class="r" style="left:33px;top:291px;width:80px;height:23px;background:#5e6560;"></div><svg class="r" style="left:13px;top:295px;" width="17" height="16" viewBox="0 0 17 16"><path d="M16 0.5 V15.5 H0.5 Z" fill="#5e6560"/></svg><div class="r" style="left:112px;top:291px;width:1px;height:23px;background:#8a8f8b;"></div><div class="t" style="left:66.7px;top:295.2px;font-size:17.3px;line-height:17.3px;color:#f0f0f0;">A</div><div class="r" style="left:192px;top:291px;width:1px;height:23px;background:#4a4a4a;"></div><div class="t" style="left:146.7px;top:295.2px;font-size:17.3px;line-height:17.3px;color:#d8d8d8;">B</div><div class="r" style="left:272px;top:291px;width:1px;height:23px;background:#4a4a4a;"></div><div class="t" style="left:226.3px;top:295.2px;font-size:17.3px;line-height:17.3px;color:#d8d8d8;">C</div><div class="r" style="left:469px;top:291px;width:1px;height:23px;background:#4a4a4a;"></div><div class="t" style="left:364.8px;top:295.2px;font-size:17.3px;line-height:17.3px;color:#d8d8d8;">D</div><div class="r" style="left:637px;top:291px;width:1px;height:23px;background:#4a4a4a;"></div><div class="t" style="left:547.7px;top:295.2px;font-size:17.3px;line-height:17.3px;color:#d8d8d8;">E</div><div class="r" style="left:805px;top:291px;width:1px;height:23px;background:#4a4a4a;"></div><div class="t" style="left:716.2px;top:295.2px;font-size:17.3px;line-height:17.3px;color:#d8d8d8;">F</div><div class="r" style="left:931px;top:291px;width:1px;height:23px;background:#4a4a4a;"></div><div class="t" style="left:861.8px;top:295.2px;font-size:17.3px;line-height:17.3px;color:#d8d8d8;">G</div><div class="r" style="left:1109px;top:291px;width:1px;height:23px;background:#4a4a4a;"></div><div class="t" style="left:1014.3px;top:295.2px;font-size:17.3px;line-height:17.3px;color:#d8d8d8;">H</div><div class="r" style="left:1237px;top:291px;width:1px;height:23px;background:#4a4a4a;"></div><div class="t" style="left:1171.1px;top:295.2px;font-size:17.3px;line-height:17.3px;color:#d8d8d8;">I</div><div class="r" style="left:1370px;top:291px;width:1px;height:23px;background:#4a4a4a;"></div><div class="t" style="left:1299.7px;top:295.2px;font-size:17.3px;line-height:17.3px;color:#d8d8d8;">J</div><div class="r" style="left:1505px;top:291px;width:1px;height:23px;background:#4a4a4a;"></div><div class="t" style="left:1432.2px;top:295.2px;font-size:17.3px;line-height:17.3px;color:#d8d8d8;">K</div><div class="r" style="left:1602px;top:291px;width:1px;height:23px;background:#4a4a4a;"></div><div class="t" style="left:1549.2px;top:295.2px;font-size:17.3px;line-height:17.3px;color:#d8d8d8;">L</div><div class="r" style="left:1682px;top:291px;width:1px;height:23px;background:#4a4a4a;"></div><div class="t" style="left:1635.3px;top:295.2px;font-size:17.3px;line-height:17.3px;color:#d8d8d8;">M</div><div class="r" style="left:1762px;top:291px;width:1px;height:23px;background:#4a4a4a;"></div><div class="t" style="left:1716.3px;top:295.2px;font-size:17.3px;line-height:17.3px;color:#d8d8d8;">N</div><div class="r" style="left:1842px;top:291px;width:1px;height:23px;background:#4a4a4a;"></div><div class="t" style="left:1795.8px;top:295.2px;font-size:17.3px;line-height:17.3px;color:#d8d8d8;">O</div><div class="t" style="left:1876.2px;top:295.2px;font-size:17.3px;line-height:17.3px;color:#d8d8d8;">P</div><div class="r" style="left:0px;top:314px;width:32px;height:703px;background:#262626;"></div><div class="r" style="left:0px;top:314px;width:32px;height:24px;background:#5e6560;"></div><div class="r" style="left:33px;top:314px;width:1861px;height:1px;background:#707070;"></div><div class="r" style="left:0px;top:338px;width:32px;height:1px;background:#8a8f8b;"></div><div class="t" style="left:11.9px;top:318.7px;font-size:16.5px;line-height:16.5px;color:#f0f0f0;">1</div><div class="r" style="left:0px;top:362px;width:32px;height:1px;background:#3c3c3c;"></div><div class="t" style="left:11.9px;top:342.7px;font-size:16.5px;line-height:16.5px;color:#d8d8d8;">2</div><div class="r" style="left:0px;top:386px;width:32px;height:1px;background:#3c3c3c;"></div><div class="t" style="left:11.9px;top:366.7px;font-size:16.5px;line-height:16.5px;color:#d8d8d8;">3</div><div class="r" style="left:0px;top:410px;width:32px;height:1px;background:#3c3c3c;"></div><div class="t" style="left:11.9px;top:390.7px;font-size:16.5px;line-height:16.5px;color:#d8d8d8;">4</div><div class="r" style="left:0px;top:434px;width:32px;height:1px;background:#3c3c3c;"></div><div class="t" style="left:11.9px;top:414.7px;font-size:16.5px;line-height:16.5px;color:#d8d8d8;">5</div><div class="r" style="left:0px;top:458px;width:32px;height:1px;background:#3c3c3c;"></div><div class="t" style="left:11.9px;top:438.7px;font-size:16.5px;line-height:16.5px;color:#d8d8d8;">6</div><div class="r" style="left:0px;top:482px;width:32px;height:1px;background:#3c3c3c;"></div><div class="t" style="left:11.9px;top:462.7px;font-size:16.5px;line-height:16.5px;color:#d8d8d8;">7</div><div class="r" style="left:0px;top:506px;width:32px;height:1px;background:#3c3c3c;"></div><div class="t" style="left:11.9px;top:486.7px;font-size:16.5px;line-height:16.5px;color:#d8d8d8;">8</div><div class="r" style="left:0px;top:530px;width:32px;height:1px;background:#3c3c3c;"></div><div class="t" style="left:11.9px;top:510.7px;font-size:16.5px;line-height:16.5px;color:#d8d8d8;">9</div><div class="r" style="left:0px;top:554px;width:32px;height:1px;background:#3c3c3c;"></div><div class="t" style="left:7.3px;top:534.7px;font-size:16.5px;line-height:16.5px;color:#d8d8d8;">10</div><div class="r" style="left:0px;top:578px;width:32px;height:1px;background:#3c3c3c;"></div><div class="t" style="left:7.9px;top:558.7px;font-size:16.5px;line-height:16.5px;color:#d8d8d8;">11</div><div class="r" style="left:0px;top:602px;width:32px;height:1px;background:#3c3c3c;"></div><div class="t" style="left:7.3px;top:582.7px;font-size:16.5px;line-height:16.5px;color:#d8d8d8;">12</div><div class="r" style="left:0px;top:626px;width:32px;height:1px;background:#3c3c3c;"></div><div class="t" style="left:7.3px;top:606.7px;font-size:16.5px;line-height:16.5px;color:#d8d8d8;">13</div><div class="r" style="left:0px;top:650px;width:32px;height:1px;background:#3c3c3c;"></div><div class="t" style="left:7.3px;top:630.7px;font-size:16.5px;line-height:16.5px;color:#d8d8d8;">14</div><div class="r" style="left:0px;top:674px;width:32px;height:1px;background:#3c3c3c;"></div><div class="t" style="left:7.3px;top:654.7px;font-size:16.5px;line-height:16.5px;color:#d8d8d8;">15</div><div class="r" style="left:0px;top:698px;width:32px;height:1px;background:#3c3c3c;"></div><div class="t" style="left:7.3px;top:678.7px;font-size:16.5px;line-height:16.5px;color:#d8d8d8;">16</div><div class="r" style="left:0px;top:722px;width:32px;height:1px;background:#3c3c3c;"></div><div class="t" style="left:7.3px;top:702.7px;font-size:16.5px;line-height:16.5px;color:#d8d8d8;">17</div><div class="r" style="left:0px;top:746px;width:32px;height:1px;background:#3c3c3c;"></div><div class="t" style="left:7.3px;top:726.7px;font-size:16.5px;line-height:16.5px;color:#d8d8d8;">18</div><div class="r" style="left:0px;top:770px;width:32px;height:1px;background:#3c3c3c;"></div><div class="t" style="left:7.3px;top:750.7px;font-size:16.5px;line-height:16.5px;color:#d8d8d8;">19</div><div class="r" style="left:0px;top:794px;width:32px;height:1px;background:#3c3c3c;"></div><div class="t" style="left:7.3px;top:774.7px;font-size:16.5px;line-height:16.5px;color:#d8d8d8;">20</div><div class="r" style="left:0px;top:818px;width:32px;height:1px;background:#3c3c3c;"></div><div class="t" style="left:7.3px;top:798.7px;font-size:16.5px;line-height:16.5px;color:#d8d8d8;">21</div><div class="r" style="left:0px;top:842px;width:32px;height:1px;background:#3c3c3c;"></div><div class="t" style="left:7.3px;top:822.7px;font-size:16.5px;line-height:16.5px;color:#d8d8d8;">22</div><div class="r" style="left:0px;top:866px;width:32px;height:1px;background:#3c3c3c;"></div><div class="t" style="left:7.3px;top:846.7px;font-size:16.5px;line-height:16.5px;color:#d8d8d8;">23</div><div class="r" style="left:0px;top:890px;width:32px;height:1px;background:#3c3c3c;"></div><div class="t" style="left:7.3px;top:870.7px;font-size:16.5px;line-height:16.5px;color:#d8d8d8;">24</div><div class="r" style="left:0px;top:914px;width:32px;height:1px;background:#3c3c3c;"></div><div class="t" style="left:7.3px;top:894.7px;font-size:16.5px;line-height:16.5px;color:#d8d8d8;">25</div><div class="r" style="left:0px;top:938px;width:32px;height:1px;background:#3c3c3c;"></div><div class="t" style="left:7.3px;top:918.7px;font-size:16.5px;line-height:16.5px;color:#d8d8d8;">26</div><div class="r" style="left:0px;top:962px;width:32px;height:1px;background:#3c3c3c;"></div><div class="t" style="left:7.3px;top:942.7px;font-size:16.5px;line-height:16.5px;color:#d8d8d8;">27</div><div class="r" style="left:0px;top:986px;width:32px;height:1px;background:#3c3c3c;"></div><div class="t" style="left:7.3px;top:966.7px;font-size:16.5px;line-height:16.5px;color:#d8d8d8;">28</div><div class="r" style="left:0px;top:1010px;width:32px;height:1px;background:#3c3c3c;"></div><div class="t" style="left:7.3px;top:990.7px;font-size:16.5px;line-height:16.5px;color:#d8d8d8;">29</div><div class="r" style="left:0px;top:1034px;width:32px;height:1px;background:#3c3c3c;"></div><div class="r" style="left:33px;top:315px;width:1861px;height:702px;background:#ffffff;"></div><div class="r" style="left:0;top:0;width:1894px;height:1016px;overflow:hidden;"><div class="c" style="left:33px;top:315px;width:79px;height:23px;border-right:1px solid #000000;border-bottom:1px solid #000000;"><span class="cb" style="left:3px;">ApplicationID</span></div><div class="c" style="left:113px;top:315px;width:79px;height:23px;border-right:1px solid #000000;border-bottom:1px solid #000000;"><span class="cb" style="left:3px;">ApplicationName</span></div><div class="c" style="left:193px;top:315px;width:79px;height:23px;border-right:1px solid #000000;border-bottom:1px solid #000000;"><span class="cb" style="left:3px;">RunAs</span></div><div class="c" style="left:273px;top:315px;width:196px;height:23px;border-right:1px solid #000000;border-bottom:1px solid #000000;"><span class="cb" style="left:3px;">LaunchAccess</span></div><div class="c" style="left:470px;top:315px;width:167px;height:23px;border-right:1px solid #000000;border-bottom:1px solid #000000;"><span class="cb" style="left:3px;">LaunchType</span></div><div class="c" style="left:638px;top:315px;width:167px;height:23px;border-right:1px solid #000000;border-bottom:1px solid #000000;"><span class="cb" style="left:3px;">LaunchPrincipal</span></div><div class="c" style="left:806px;top:315px;width:125px;height:23px;border-right:1px solid #000000;border-bottom:1px solid #000000;"><span class="cb" style="left:3px;">LaunchSID</span></div><div class="c" style="left:932px;top:315px;width:177px;height:23px;border-right:1px solid #000000;border-bottom:1px solid #000000;"><span class="cb" style="left:3px;">AccessAccess</span></div><div class="c" style="left:1110px;top:315px;width:127px;height:23px;border-right:1px solid #000000;border-bottom:1px solid #000000;"><span class="cb" style="left:3px;">AccessType</span></div><div class="c" style="left:1238px;top:315px;width:132px;height:23px;border-right:1px solid #000000;border-bottom:1px solid #000000;"><span class="cb" style="left:3px;">AccessPrincipal</span></div><div class="c" style="left:1371px;top:315px;width:134px;height:23px;border-right:1px solid #000000;border-bottom:1px solid #000000;"><span class="cb" style="left:3px;">AccessSID</span></div><div class="c" style="left:1506px;top:315px;width:96px;height:23px;border-right:1px solid #000000;border-bottom:1px solid #000000;"><span class="cb" style="left:3px;">AuthLevel</span></div><div class="c" style="left:1603px;top:315px;width:79px;height:23px;border-right:1px solid #000000;border-bottom:1px solid #000000;"><span class="cb" style="left:3px;">ImpLevel</span></div><div class="c" style="left:1683px;top:315px;width:79px;height:23px;border-right:1px solid #000000;border-bottom:1px solid #000000;"><span class="cb" style="left:3px;">CLSIDs</span></div><div class="c" style="left:1763px;top:315px;width:79px;height:23px;border-right:1px solid #d4d4d4;border-bottom:1px solid #d4d4d4;"></div><div class="c" style="left:1843px;top:315px;width:50px;height:23px;border-right:1px solid #d4d4d4;border-bottom:1px solid #d4d4d4;"></div><div class="c" style="left:33px;top:339px;width:79px;height:23px;border-right:1px solid #d4d4d4;border-bottom:1px solid #d4d4d4;"><span class="cn" style="left:4px;">{69AD4AEE-51BE-439B-A592-B8A7B8E7D5C9}</span></div><div class="c" style="left:113px;top:339px;width:79px;height:23px;border-right:1px solid #d4d4d4;border-bottom:1px solid #d4d4d4;"><span class="cn" style="left:4px;">BackgroundTaskHost</span></div><div class="c" style="left:193px;top:339px;width:79px;height:23px;border-right:1px solid #d4d4d4;border-bottom:1px solid #d4d4d4;"><span class="cn" style="left:4px;">The Launching User</span></div><div class="c" style="left:273px;top:339px;width:196px;height:23px;border-right:1px solid #d4d4d4;border-bottom:1px solid #d4d4d4;"><span class="cn" style="left:4px;">LocalLaunch. RemoteLaunch. LocalActivation</span></div><div class="c" style="left:470px;top:339px;width:167px;height:23px;border-right:1px solid #d4d4d4;border-bottom:1px solid #d4d4d4;"><span class="cn" style="left:4px;">AccessAllowed</span></div><div class="c" style="left:638px;top:339px;width:167px;height:23px;border-right:1px solid #d4d4d4;border-bottom:1px solid #d4d4d4;"><span class="cn" style="left:4px;">BUILTIN\<i>А</i>дминистраторы</span></div><div class="c" style="left:806px;top:339px;width:125px;height:23px;border-right:1px solid #d4d4d4;border-bottom:1px solid #d4d4d4;"><span class="cn" style="left:4px;">S-1-5-32-544</span></div><div class="c" style="left:932px;top:339px;width:177px;height:23px;border-right:1px solid #d4d4d4;border-bottom:1px solid #d4d4d4;"></div><div class="c" style="left:1110px;top:339px;width:127px;height:23px;border-right:1px solid #d4d4d4;border-bottom:1px solid #d4d4d4;"></div><div class="c" style="left:1238px;top:339px;width:132px;height:23px;border-right:1px solid #d4d4d4;border-bottom:1px solid #d4d4d4;"></div><div class="c" style="left:1371px;top:339px;width:134px;height:23px;border-right:1px solid #d4d4d4;border-bottom:1px solid #d4d4d4;"></div><div class="c" style="left:1506px;top:339px;width:96px;height:23px;border-right:1px solid #d4d4d4;border-bottom:1px solid #d4d4d4;"></div><div class="c" style="left:1603px;top:339px;width:79px;height:23px;border-right:1px solid #d4d4d4;border-bottom:1px solid #d4d4d4;"></div><div class="c" style="left:1683px;top:339px;width:210px;height:23px;border-right:1px solid #d4d4d4;border-bottom:1px solid #d4d4d4;"><span class="cn" style="left:4px;">{F087771F-D74F-4C1A-BB8A-E16ACA9124EA}</span></div><div class="c" style="left:33px;top:363px;width:79px;height:23px;border-right:1px solid #d4d4d4;border-bottom:1px solid #d4d4d4;"><span class="cn" style="left:4px;">{69AD4AEE-51BE-439B-A592-B8A7B8E7D5C9}</span></div><div class="c" style="left:113px;top:363px;width:79px;height:23px;border-right:1px solid #d4d4d4;border-bottom:1px solid #d4d4d4;"><span class="cn" style="left:4px;">BackgroundTaskHost</span></div><div class="c" style="left:193px;top:363px;width:79px;height:23px;border-right:1px solid #d4d4d4;border-bottom:1px solid #d4d4d4;"><span class="cn" style="left:4px;">The Launching User</span></div><div class="c" style="left:273px;top:363px;width:196px;height:23px;border-right:1px solid #d4d4d4;border-bottom:1px solid #d4d4d4;"><span class="cn" style="left:4px;">LocalLaunch. RemoteLaunch. LocalActivation</span></div><div class="c" style="left:470px;top:363px;width:167px;height:23px;border-right:1px solid #d4d4d4;border-bottom:1px solid #d4d4d4;"><span class="cn" style="left:4px;">AccessAllowed</span></div><div class="c" style="left:638px;top:363px;width:167px;height:23px;border-right:1px solid #d4d4d4;border-bottom:1px solid #d4d4d4;"><span class="cn" style="left:4px;">NT AUTHORITY\<i>ИНТЕРАКТИВНЫЕ</i></span></div><div class="c" style="left:806px;top:363px;width:125px;height:23px;border-right:1px solid #d4d4d4;border-bottom:1px solid #d4d4d4;"><span class="cn" style="left:4px;">S-1-5-4</span></div><div class="c" style="left:932px;top:363px;width:177px;height:23px;border-right:1px solid #d4d4d4;border-bottom:1px solid #d4d4d4;"></div><div class="c" style="left:1110px;top:363px;width:127px;height:23px;border-right:1px solid #d4d4d4;border-bottom:1px solid #d4d4d4;"></div><div class="c" style="left:1238px;top:363px;width:132px;height:23px;border-right:1px solid #d4d4d4;border-bottom:1px solid #d4d4d4;"></div><div class="c" style="left:1371px;top:363px;width:134px;height:23px;border-right:1px solid #d4d4d4;border-bottom:1px solid #d4d4d4;"></div><div class="c" style="left:1506px;top:363px;width:96px;height:23px;border-right:1px solid #d4d4d4;border-bottom:1px solid #d4d4d4;"></div><div class="c" style="left:1603px;top:363px;width:79px;height:23px;border-right:1px solid #d4d4d4;border-bottom:1px solid #d4d4d4;"></div><div class="c" style="left:1683px;top:363px;width:210px;height:23px;border-right:1px solid #d4d4d4;border-bottom:1px solid #d4d4d4;"><span class="cn" style="left:4px;">{F087771F-D74F-4C1A-BB8A-E16ACA9124EA}</span></div><div class="c" style="left:33px;top:387px;width:79px;height:23px;border-right:1px solid #d4d4d4;border-bottom:1px solid #d4d4d4;"><span class="cn" style="left:4px;">{69AD4AEE-51BE-439B-A592-B8A7B8E7D5C9}</span></div><div class="c" style="left:113px;top:387px;width:79px;height:23px;border-right:1px solid #d4d4d4;border-bottom:1px solid #d4d4d4;"><span class="cn" style="left:4px;">BackgroundTaskHost</span></div><div class="c" style="left:193px;top:387px;width:79px;height:23px;border-right:1px solid #d4d4d4;border-bottom:1px solid #d4d4d4;"><span class="cn" style="left:4px;">The Launching User</span></div><div class="c" style="left:273px;top:387px;width:196px;height:23px;border-right:1px solid #d4d4d4;border-bottom:1px solid #d4d4d4;"><span class="cn" style="left:4px;">LocalLaunch. RemoteLaunch. LocalActivation</span></div><div class="c" style="left:470px;top:387px;width:167px;height:23px;border-right:1px solid #d4d4d4;border-bottom:1px solid #d4d4d4;"><span class="cn" style="left:4px;">AccessAllowed</span></div><div class="c" style="left:638px;top:387px;width:167px;height:23px;border-right:1px solid #d4d4d4;border-bottom:1px solid #d4d4d4;"><span class="cn" style="left:4px;">BUILTIN\<i>П</i>ользователи</span></div><div class="c" style="left:806px;top:387px;width:125px;height:23px;border-right:1px solid #d4d4d4;border-bottom:1px solid #d4d4d4;"><span class="cn" style="left:4px;">S-1-5-32-580</span></div><div class="c" style="left:932px;top:387px;width:177px;height:23px;border-right:1px solid #d4d4d4;border-bottom:1px solid #d4d4d4;"></div><div class="c" style="left:1110px;top:387px;width:127px;height:23px;border-right:1px solid #d4d4d4;border-bottom:1px solid #d4d4d4;"></div><div class="c" style="left:1238px;top:387px;width:132px;height:23px;border-right:1px solid #d4d4d4;border-bottom:1px solid #d4d4d4;"></div><div class="c" style="left:1371px;top:387px;width:134px;height:23px;border-right:1px solid #d4d4d4;border-bottom:1px solid #d4d4d4;"></div><div class="c" style="left:1506px;top:387px;width:96px;height:23px;border-right:1px solid #d4d4d4;border-bottom:1px solid #d4d4d4;"></div><div class="c" style="left:1603px;top:387px;width:79px;height:23px;border-right:1px solid #d4d4d4;border-bottom:1px solid #d4d4d4;"></div><div class="c" style="left:1683px;top:387px;width:210px;height:23px;border-right:1px solid #d4d4d4;border-bottom:1px solid #d4d4d4;"><span class="cn" style="left:4px;">{F087771F-D74F-4C1A-BB8A-E16ACA9124EA}</span></div><div class="c" style="left:33px;top:411px;width:79px;height:23px;border-right:1px solid #d4d4d4;border-bottom:1px solid #d4d4d4;"><span class="cn" style="left:4px;">{69AD4AEE-51BE-439B-A592-B8A7B8E7D5C9}</span></div><div class="c" style="left:113px;top:411px;width:79px;height:23px;border-right:1px solid #d4d4d4;border-bottom:1px solid #d4d4d4;"><span class="cn" style="left:4px;">BackgroundTaskHost</span></div><div class="c" style="left:193px;top:411px;width:79px;height:23px;border-right:1px solid #d4d4d4;border-bottom:1px solid #d4d4d4;"><span class="cn" style="left:4px;">The Launching User</span></div><div class="c" style="left:273px;top:411px;width:196px;height:23px;border-right:1px solid #d4d4d4;border-bottom:1px solid #d4d4d4;"><span class="cn" style="left:4px;">LocalLaunch. RemoteLaunch. LocalActivation</span></div><div class="c" style="left:470px;top:411px;width:167px;height:23px;border-right:1px solid #d4d4d4;border-bottom:1px solid #d4d4d4;"><span class="cn" style="left:4px;">AccessAllowed</span></div><div class="c" style="left:638px;top:411px;width:167px;height:23px;border-right:1px solid #d4d4d4;border-bottom:1px solid #d4d4d4;"><span class="cn" style="left:4px;">NT AUTHORITY\<i>СЛУЖБА</i></span></div><div class="c" style="left:806px;top:411px;width:125px;height:23px;border-right:1px solid #d4d4d4;border-bottom:1px solid #d4d4d4;"><span class="cn" style="left:4px;">S-1-5-6</span></div><div class="c" style="left:932px;top:411px;width:177px;height:23px;border-right:1px solid #d4d4d4;border-bottom:1px solid #d4d4d4;"></div><div class="c" style="left:1110px;top:411px;width:127px;height:23px;border-right:1px solid #d4d4d4;border-bottom:1px solid #d4d4d4;"></div><div class="c" style="left:1238px;top:411px;width:132px;height:23px;border-right:1px solid #d4d4d4;border-bottom:1px solid #d4d4d4;"></div><div class="c" style="left:1371px;top:411px;width:134px;height:23px;border-right:1px solid #d4d4d4;border-bottom:1px solid #d4d4d4;"></div><div class="c" style="left:1506px;top:411px;width:96px;height:23px;border-right:1px solid #d4d4d4;border-bottom:1px solid #d4d4d4;"></div><div class="c" style="left:1603px;top:411px;width:79px;height:23px;border-right:1px solid #d4d4d4;border-bottom:1px solid #d4d4d4;"></div><div class="c" style="left:1683px;top:411px;width:210px;height:23px;border-right:1px solid #d4d4d4;border-bottom:1px solid #d4d4d4;"><span class="cn" style="left:4px;">{F087771F-D74F-4C1A-BB8A-E16ACA9124EA}</span></div><div class="c" style="left:33px;top:435px;width:79px;height:23px;border-right:1px solid #d4d4d4;border-bottom:1px solid #d4d4d4;"><span class="cn" style="left:4px;">{69AD4AEE-51BE-439B-A592-B8A7B8E7D5C9}</span></div><div class="c" style="left:113px;top:435px;width:79px;height:23px;border-right:1px solid #d4d4d4;border-bottom:1px solid #d4d4d4;"><span class="cn" style="left:4px;">BackgroundTaskHost</span></div><div class="c" style="left:193px;top:435px;width:79px;height:23px;border-right:1px solid #d4d4d4;border-bottom:1px solid #d4d4d4;"><span class="cn" style="left:4px;">The Launching User</span></div><div class="c" style="left:273px;top:435px;width:196px;height:23px;border-right:1px solid #d4d4d4;border-bottom:1px solid #d4d4d4;"><span class="cn" style="left:4px;">LocalLaunch. RemoteLaunch. LocalActivation</span></div><div class="c" style="left:470px;top:435px;width:167px;height:23px;border-right:1px solid #d4d4d4;border-bottom:1px solid #d4d4d4;"><span class="cn" style="left:4px;">AccessAllowed</span></div><div class="c" style="left:638px;top:435px;width:167px;height:23px;border-right:1px solid #d4d4d4;border-bottom:1px solid #d4d4d4;"><span class="cn" style="left:4px;">NT AUTHORITY\<i>СИСТЕМА</i></span></div><div class="c" style="left:806px;top:435px;width:125px;height:23px;border-right:1px solid #d4d4d4;border-bottom:1px solid #d4d4d4;"><span class="cn" style="left:4px;">S-1-5-18</span></div><div class="c" style="left:932px;top:435px;width:177px;height:23px;border-right:1px solid #d4d4d4;border-bottom:1px solid #d4d4d4;"></div><div class="c" style="left:1110px;top:435px;width:127px;height:23px;border-right:1px solid #d4d4d4;border-bottom:1px solid #d4d4d4;"></div><div class="c" style="left:1238px;top:435px;width:132px;height:23px;border-right:1px solid #d4d4d4;border-bottom:1px solid #d4d4d4;"></div><div class="c" style="left:1371px;top:435px;width:134px;height:23px;border-right:1px solid #d4d4d4;border-bottom:1px solid #d4d4d4;"></div><div class="c" style="left:1506px;top:435px;width:96px;height:23px;border-right:1px solid #d4d4d4;border-bottom:1px solid #d4d4d4;"></div><div class="c" style="left:1603px;top:435px;width:79px;height:23px;border-right:1px solid #d4d4d4;border-bottom:1px solid #d4d4d4;"></div><div class="c" style="left:1683px;top:435px;width:210px;height:23px;border-right:1px solid #d4d4d4;border-bottom:1px solid #d4d4d4;"><span class="cn" style="left:4px;">{F087771F-D74F-4C1A-BB8A-E16ACA9124EA}</span></div><div class="c" style="left:33px;top:459px;width:79px;height:23px;border-right:1px solid #d4d4d4;border-bottom:1px solid #d4d4d4;"><span class="cn" style="left:4px;">{69AD4AEE-51BE-439B-A592-B8A7B8E7D5C9}</span></div><div class="c" style="left:113px;top:459px;width:79px;height:23px;border-right:1px solid #d4d4d4;border-bottom:1px solid #d4d4d4;"><span class="cn" style="left:4px;">BackgroundTaskHost</span></div><div class="c" style="left:193px;top:459px;width:79px;height:23px;border-right:1px solid #d4d4d4;border-bottom:1px solid #d4d4d4;"><span class="cn" style="left:4px;">The Launching User</span></div><div class="c" style="left:273px;top:459px;width:196px;height:23px;border-right:1px solid #d4d4d4;border-bottom:1px solid #d4d4d4;"><span class="cn" style="left:4px;">LocalLaunch. RemoteLaunch. LocalActivation</span></div><div class="c" style="left:470px;top:459px;width:167px;height:23px;border-right:1px solid #d4d4d4;border-bottom:1px solid #d4d4d4;"><span class="cn" style="left:4px;">AccessAllowed</span></div><div class="c" style="left:638px;top:459px;width:167px;height:23px;border-right:1px solid #d4d4d4;border-bottom:1px solid #d4d4d4;"><span class="cn" style="left:4px;"><i>ЦЕНТР ПАКЕТОВ ПРИЛОЖЕНИЙ</i></span></div><div class="c" style="left:806px;top:459px;width:125px;height:23px;border-right:1px solid #d4d4d4;border-bottom:1px solid #d4d4d4;"><span class="cn" style="left:4px;">S-1-15-3-1</span></div><div class="c" style="left:932px;top:459px;width:177px;height:23px;border-right:1px solid #d4d4d4;border-bottom:1px solid #d4d4d4;"></div><div class="c" style="left:1110px;top:459px;width:127px;height:23px;border-right:1px solid #d4d4d4;border-bottom:1px solid #d4d4d4;"></div><div class="c" style="left:1238px;top:459px;width:132px;height:23px;border-right:1px solid #d4d4d4;border-bottom:1px solid #d4d4d4;"></div><div class="c" style="left:1371px;top:459px;width:134px;height:23px;border-right:1px solid #d4d4d4;border-bottom:1px solid #d4d4d4;"></div><div class="c" style="left:1506px;top:459px;width:96px;height:23px;border-right:1px solid #d4d4d4;border-bottom:1px solid #d4d4d4;"></div><div class="c" style="left:1603px;top:459px;width:79px;height:23px;border-right:1px solid #d4d4d4;border-bottom:1px solid #d4d4d4;"></div><div class="c" style="left:1683px;top:459px;width:210px;height:23px;border-right:1px solid #d4d4d4;border-bottom:1px solid #d4d4d4;"><span class="cn" style="left:4px;">{F087771F-D74F-4C1A-BB8A-E16ACA9124EA}</span></div><div class="c" style="left:33px;top:483px;width:79px;height:23px;border-right:1px solid #d4d4d4;border-bottom:1px solid #d4d4d4;"><span class="cn" style="left:4px;">{69AD4AEE-51BE-439B-A592-B8A7B8E7D5C9}</span></div><div class="c" style="left:113px;top:483px;width:79px;height:23px;border-right:1px solid #d4d4d4;border-bottom:1px solid #d4d4d4;"><span class="cn" style="left:4px;">BackgroundTaskHost</span></div><div class="c" style="left:193px;top:483px;width:79px;height:23px;border-right:1px solid #d4d4d4;border-bottom:1px solid #d4d4d4;"><span class="cn" style="left:4px;">The Launching User</span></div><div class="c" style="left:273px;top:483px;width:196px;height:23px;border-right:1px solid #d4d4d4;border-bottom:1px solid #d4d4d4;"><span class="cn" style="left:4px;">LocalLaunch. RemoteLaunch. LocalActivation</span></div><div class="c" style="left:470px;top:483px;width:167px;height:23px;border-right:1px solid #d4d4d4;border-bottom:1px solid #d4d4d4;"><span class="cn" style="left:4px;">AccessAllowed</span></div><div class="c" style="left:638px;top:483px;width:167px;height:23px;border-right:1px solid #d4d4d4;border-bottom:1px solid #d4d4d4;"><span class="cn" style="left:4px;"><i>ЦЕНТР ПАКЕТОВ ПРИЛОЖЕНИЙ</i></span></div><div class="c" style="left:806px;top:483px;width:125px;height:23px;border-right:1px solid #d4d4d4;border-bottom:1px solid #d4d4d4;"><span class="cn" style="left:4px;">S-1-15-3-2</span></div><div class="c" style="left:932px;top:483px;width:177px;height:23px;border-right:1px solid #d4d4d4;border-bottom:1px solid #d4d4d4;"></div><div class="c" style="left:1110px;top:483px;width:127px;height:23px;border-right:1px solid #d4d4d4;border-bottom:1px solid #d4d4d4;"></div><div class="c" style="left:1238px;top:483px;width:132px;height:23px;border-right:1px solid #d4d4d4;border-bottom:1px solid #d4d4d4;"></div><div class="c" style="left:1371px;top:483px;width:134px;height:23px;border-right:1px solid #d4d4d4;border-bottom:1px solid #d4d4d4;"></div><div class="c" style="left:1506px;top:483px;width:96px;height:23px;border-right:1px solid #d4d4d4;border-bottom:1px solid #d4d4d4;"></div><div class="c" style="left:1603px;top:483px;width:79px;height:23px;border-right:1px solid #d4d4d4;border-bottom:1px solid #d4d4d4;"></div><div class="c" style="left:1683px;top:483px;width:210px;height:23px;border-right:1px solid #d4d4d4;border-bottom:1px solid #d4d4d4;"><span class="cn" style="left:4px;">{F087771F-D74F-4C1A-BB8A-E16ACA9124EA}</span></div><div class="c" style="left:33px;top:507px;width:79px;height:23px;border-right:1px solid #d4d4d4;border-bottom:1px solid #d4d4d4;"><span class="cn" style="left:4px;">{69AD4AEE-51BE-439B-A592-B8A7B8E7D5C9}</span></div><div class="c" style="left:113px;top:507px;width:79px;height:23px;border-right:1px solid #d4d4d4;border-bottom:1px solid #d4d4d4;"><span class="cn" style="left:4px;">BackgroundTaskHost</span></div><div class="c" style="left:193px;top:507px;width:79px;height:23px;border-right:1px solid #d4d4d4;border-bottom:1px solid #d4d4d4;"><span class="cn" style="left:4px;">The Launching User</span></div><div class="c" style="left:273px;top:507px;width:196px;height:23px;border-right:1px solid #d4d4d4;border-bottom:1px solid #d4d4d4;"><span class="cn" style="left:4px;">LocalLaunch. RemoteLaunch. LocalActivation</span></div><div class="c" style="left:470px;top:507px;width:167px;height:23px;border-right:1px solid #d4d4d4;border-bottom:1px solid #d4d4d4;"><span class="cn" style="left:4px;">AccessAllowed</span></div><div class="c" style="left:638px;top:507px;width:167px;height:23px;border-right:1px solid #d4d4d4;border-bottom:1px solid #d4d4d4;"><span class="cn" style="left:4px;"><i>ЦЕНТР ПАКЕТОВ ПРИЛОЖЕНИЙ</i></span></div><div class="c" style="left:806px;top:507px;width:125px;height:23px;border-right:1px solid #d4d4d4;border-bottom:1px solid #d4d4d4;"><span class="cn" style="left:4px;">S-1-15-3-3</span></div><div class="c" style="left:932px;top:507px;width:177px;height:23px;border-right:1px solid #d4d4d4;border-bottom:1px solid #d4d4d4;"></div><div class="c" style="left:1110px;top:507px;width:127px;height:23px;border-right:1px solid #d4d4d4;border-bottom:1px solid #d4d4d4;"></div><div class="c" style="left:1238px;top:507px;width:132px;height:23px;border-right:1px solid #d4d4d4;border-bottom:1px solid #d4d4d4;"></div><div class="c" style="left:1371px;top:507px;width:134px;height:23px;border-right:1px solid #d4d4d4;border-bottom:1px solid #d4d4d4;"></div><div class="c" style="left:1506px;top:507px;width:96px;height:23px;border-right:1px solid #d4d4d4;border-bottom:1px solid #d4d4d4;"></div><div class="c" style="left:1603px;top:507px;width:79px;height:23px;border-right:1px solid #d4d4d4;border-bottom:1px solid #d4d4d4;"></div><div class="c" style="left:1683px;top:507px;width:210px;height:23px;border-right:1px solid #d4d4d4;border-bottom:1px solid #d4d4d4;"><span class="cn" style="left:4px;">{F087771F-D74F-4C1A-BB8A-E16ACA9124EA}</span></div><div class="c" style="left:33px;top:531px;width:79px;height:23px;border-right:1px solid #d4d4d4;border-bottom:1px solid #d4d4d4;"><span class="cn" style="left:4px;">{36234D6F-0E1B-4C9E-8B3A-1A2B3C4D5E6F}</span></div><div class="c" style="left:113px;top:531px;width:79px;height:23px;border-right:1px solid #d4d4d4;border-bottom:1px solid #d4d4d4;"><span class="cn" style="left:4px;">CoreDpuWorker</span></div><div class="c" style="left:193px;top:531px;width:79px;height:23px;border-right:1px solid #d4d4d4;border-bottom:1px solid #d4d4d4;"><span class="cn" style="left:4px;">The Launching User</span></div><div class="c" style="left:273px;top:531px;width:196px;height:23px;border-right:1px solid #d4d4d4;border-bottom:1px solid #d4d4d4;"><span class="cn" style="left:4px;">LocalLaunch. LocalActivation</span></div><div class="c" style="left:470px;top:531px;width:167px;height:23px;border-right:1px solid #d4d4d4;border-bottom:1px solid #d4d4d4;"><span class="cn" style="left:4px;">AccessAllowed</span></div><div class="c" style="left:638px;top:531px;width:167px;height:23px;border-right:1px solid #d4d4d4;border-bottom:1px solid #d4d4d4;"><span class="cn" style="left:4px;"><i>ЦЕНТР ПАКЕТОВ ПРИЛОЖЕНИЙ</i></span></div><div class="c" style="left:806px;top:531px;width:125px;height:23px;border-right:1px solid #d4d4d4;border-bottom:1px solid #d4d4d4;"><span class="cn" style="left:4px;">S-1-15-2-1</span></div><div class="c" style="left:932px;top:531px;width:177px;height:23px;border-right:1px solid #d4d4d4;border-bottom:1px solid #d4d4d4;"><span class="cn" style="left:4px;">LocalAccess</span></div><div class="c" style="left:1110px;top:531px;width:127px;height:23px;border-right:1px solid #d4d4d4;border-bottom:1px solid #d4d4d4;"><span class="cn" style="left:4px;">AccessAllowed</span></div><div class="c" style="left:1238px;top:531px;width:132px;height:23px;border-right:1px solid #d4d4d4;border-bottom:1px solid #d4d4d4;"><span class="cn" style="left:4px;"><i>ЦЕНТР ПАКЕТОВ ПРИЛОЖЕНИЙ</i></span></div><div class="c" style="left:1371px;top:531px;width:134px;height:23px;border-right:1px solid #d4d4d4;border-bottom:1px solid #d4d4d4;"><span class="cn" style="left:4px;">S-1-15-2-1</span></div><div class="c" style="left:1506px;top:531px;width:96px;height:23px;border-right:1px solid #d4d4d4;border-bottom:1px solid #d4d4d4;"></div><div class="c" style="left:1603px;top:531px;width:79px;height:23px;border-right:1px solid #d4d4d4;border-bottom:1px solid #d4d4d4;"></div><div class="c" style="left:1683px;top:531px;width:79px;height:23px;border-right:1px solid #d4d4d4;border-bottom:1px solid #d4d4d4;"></div><div class="c" style="left:1763px;top:531px;width:79px;height:23px;border-right:1px solid #d4d4d4;border-bottom:1px solid #d4d4d4;"></div><div class="c" style="left:1843px;top:531px;width:50px;height:23px;border-right:1px solid #d4d4d4;border-bottom:1px solid #d4d4d4;"></div><div class="c" style="left:33px;top:555px;width:79px;height:23px;border-right:1px solid #d4d4d4;border-bottom:1px solid #d4d4d4;"><span class="cn" style="left:4px;">{36234D6F-0E1B-4C9E-8B3A-1A2B3C4D5E6F}</span></div><div class="c" style="left:113px;top:555px;width:79px;height:23px;border-right:1px solid #d4d4d4;border-bottom:1px solid #d4d4d4;"><span class="cn" style="left:4px;">CoreDpuWorker</span></div><div class="c" style="left:193px;top:555px;width:79px;height:23px;border-right:1px solid #d4d4d4;border-bottom:1px solid #d4d4d4;"><span class="cn" style="left:4px;">The Launching User</span></div><div class="c" style="left:273px;top:555px;width:196px;height:23px;border-right:1px solid #d4d4d4;border-bottom:1px solid #d4d4d4;"><span class="cn" style="left:4px;">LocalLaunch. LocalActivation</span></div><div class="c" style="left:470px;top:555px;width:167px;height:23px;border-right:1px solid #d4d4d4;border-bottom:1px solid #d4d4d4;"><span class="cn" style="left:4px;">AccessAllowed</span></div><div class="c" style="left:638px;top:555px;width:167px;height:23px;border-right:1px solid #d4d4d4;border-bottom:1px solid #d4d4d4;"><span class="cn" style="left:4px;"><i>В</i>се</span></div><div class="c" style="left:806px;top:555px;width:125px;height:23px;border-right:1px solid #d4d4d4;border-bottom:1px solid #d4d4d4;"><span class="cn" style="left:4px;">S-1-1-0</span></div><div class="c" style="left:932px;top:555px;width:177px;height:23px;border-right:1px solid #d4d4d4;border-bottom:1px solid #d4d4d4;"><span class="cn" style="left:4px;">LocalAccess</span></div><div class="c" style="left:1110px;top:555px;width:127px;height:23px;border-right:1px solid #d4d4d4;border-bottom:1px solid #d4d4d4;"><span class="cn" style="left:4px;">AccessAllowed</span></div><div class="c" style="left:1238px;top:555px;width:132px;height:23px;border-right:1px solid #d4d4d4;border-bottom:1px solid #d4d4d4;"><span class="cn" style="left:4px;"><i>В</i>се</span></div><div class="c" style="left:1371px;top:555px;width:134px;height:23px;border-right:1px solid #d4d4d4;border-bottom:1px solid #d4d4d4;"><span class="cn" style="left:4px;">S-1-1-0</span></div><div class="c" style="left:1506px;top:555px;width:96px;height:23px;border-right:1px solid #d4d4d4;border-bottom:1px solid #d4d4d4;"></div><div class="c" style="left:1603px;top:555px;width:79px;height:23px;border-right:1px solid #d4d4d4;border-bottom:1px solid #d4d4d4;"></div><div class="c" style="left:1683px;top:555px;width:79px;height:23px;border-right:1px solid #d4d4d4;border-bottom:1px solid #d4d4d4;"></div><div class="c" style="left:1763px;top:555px;width:79px;height:23px;border-right:1px solid #d4d4d4;border-bottom:1px solid #d4d4d4;"></div><div class="c" style="left:1843px;top:555px;width:50px;height:23px;border-right:1px solid #d4d4d4;border-bottom:1px solid #d4d4d4;"></div><div class="c" style="left:33px;top:579px;width:79px;height:23px;border-right:1px solid #d4d4d4;border-bottom:1px solid #d4d4d4;"><span class="cn" style="left:4px;">{64D4882D-AB12-4C3F-9E8D-7F6A5B4C3D2E}</span></div><div class="c" style="left:113px;top:579px;width:79px;height:23px;border-right:1px solid #d4d4d4;border-bottom:1px solid #d4d4d4;"><span class="cn" style="left:4px;">CoreShellHost</span></div><div class="c" style="left:193px;top:579px;width:79px;height:23px;border-right:1px solid #d4d4d4;border-bottom:1px solid #d4d4d4;"><span class="cn" style="left:4px;">Interactive User</span></div><div class="c" style="left:273px;top:579px;width:196px;height:23px;border-right:1px solid #d4d4d4;border-bottom:1px solid #d4d4d4;"><span class="cn" style="left:4px;">LocalLaunch. LocalActivation</span></div><div class="c" style="left:470px;top:579px;width:167px;height:23px;border-right:1px solid #d4d4d4;border-bottom:1px solid #d4d4d4;"><span class="cn" style="left:4px;">AccessAllowed</span></div><div class="c" style="left:638px;top:579px;width:167px;height:23px;border-right:1px solid #d4d4d4;border-bottom:1px solid #d4d4d4;"><span class="cn" style="left:4px;">NT AUTHORITY\<i>ИНТЕРАКТИВНЫЕ</i></span></div><div class="c" style="left:806px;top:579px;width:125px;height:23px;border-right:1px solid #d4d4d4;border-bottom:1px solid #d4d4d4;"><span class="cn" style="left:4px;">S-1-5-4</span></div><div class="c" style="left:932px;top:579px;width:177px;height:23px;border-right:1px solid #d4d4d4;border-bottom:1px solid #d4d4d4;"><span class="cn" style="left:4px;">LocalAccess</span></div><div class="c" style="left:1110px;top:579px;width:127px;height:23px;border-right:1px solid #d4d4d4;border-bottom:1px solid #d4d4d4;"><span class="cn" style="left:4px;">AccessAllowed</span></div><div class="c" style="left:1238px;top:579px;width:132px;height:23px;border-right:1px solid #d4d4d4;border-bottom:1px solid #d4d4d4;"><span class="cn" style="left:4px;">NT AUTHORITY\<i>ИНТЕРАКТИВНЫЕ</i></span></div><div class="c" style="left:1371px;top:579px;width:134px;height:23px;border-right:1px solid #d4d4d4;border-bottom:1px solid #d4d4d4;"><span class="cn" style="left:4px;">S-1-5-4</span></div><div class="c" style="left:1506px;top:579px;width:96px;height:23px;border-right:1px solid #d4d4d4;border-bottom:1px solid #d4d4d4;"></div><div class="c" style="left:1603px;top:579px;width:79px;height:23px;border-right:1px solid #d4d4d4;border-bottom:1px solid #d4d4d4;"></div><div class="c" style="left:1683px;top:579px;width:79px;height:23px;border-right:1px solid #d4d4d4;border-bottom:1px solid #d4d4d4;"></div><div class="c" style="left:1763px;top:579px;width:79px;height:23px;border-right:1px solid #d4d4d4;border-bottom:1px solid #d4d4d4;"></div><div class="c" style="left:1843px;top:579px;width:50px;height:23px;border-right:1px solid #d4d4d4;border-bottom:1px solid #d4d4d4;"></div><div class="c" style="left:33px;top:603px;width:79px;height:23px;border-right:1px solid #d4d4d4;border-bottom:1px solid #d4d4d4;"><span class="cn" style="left:4px;">{64D4882D-AB12-4C3F-9E8D-7F6A5B4C3D2E}</span></div><div class="c" style="left:113px;top:603px;width:79px;height:23px;border-right:1px solid #d4d4d4;border-bottom:1px solid #d4d4d4;"><span class="cn" style="left:4px;">CoreShellHost</span></div><div class="c" style="left:193px;top:603px;width:79px;height:23px;border-right:1px solid #d4d4d4;border-bottom:1px solid #d4d4d4;"><span class="cn" style="left:4px;">Interactive User</span></div><div class="c" style="left:273px;top:603px;width:196px;height:23px;border-right:1px solid #d4d4d4;border-bottom:1px solid #d4d4d4;"><span class="cn" style="left:4px;">LocalLaunch. LocalActivation</span></div><div class="c" style="left:470px;top:603px;width:167px;height:23px;border-right:1px solid #d4d4d4;border-bottom:1px solid #d4d4d4;"><span class="cn" style="left:4px;">AccessAllowed</span></div><div class="c" style="left:638px;top:603px;width:167px;height:23px;border-right:1px solid #d4d4d4;border-bottom:1px solid #d4d4d4;"><span class="cn" style="left:4px;">NT AUTHORITY\<i>СИСТЕМА</i></span></div><div class="c" style="left:806px;top:603px;width:125px;height:23px;border-right:1px solid #d4d4d4;border-bottom:1px solid #d4d4d4;"><span class="cn" style="left:4px;">S-1-5-18</span></div><div class="c" style="left:932px;top:603px;width:177px;height:23px;border-right:1px solid #d4d4d4;border-bottom:1px solid #d4d4d4;"><span class="cn" style="left:4px;">LocalAccess</span></div><div class="c" style="left:1110px;top:603px;width:127px;height:23px;border-right:1px solid #d4d4d4;border-bottom:1px solid #d4d4d4;"><span class="cn" style="left:4px;">AccessAllowed</span></div><div class="c" style="left:1238px;top:603px;width:132px;height:23px;border-right:1px solid #d4d4d4;border-bottom:1px solid #d4d4d4;"><span class="cn" style="left:4px;">NT AUTHORITY\<i>СИСТЕМА</i></span></div><div class="c" style="left:1371px;top:603px;width:134px;height:23px;border-right:1px solid #d4d4d4;border-bottom:1px solid #d4d4d4;"><span class="cn" style="left:4px;">S-1-5-18</span></div><div class="c" style="left:1506px;top:603px;width:96px;height:23px;border-right:1px solid #d4d4d4;border-bottom:1px solid #d4d4d4;"></div><div class="c" style="left:1603px;top:603px;width:79px;height:23px;border-right:1px solid #d4d4d4;border-bottom:1px solid #d4d4d4;"></div><div class="c" style="left:1683px;top:603px;width:79px;height:23px;border-right:1px solid #d4d4d4;border-bottom:1px solid #d4d4d4;"></div><div class="c" style="left:1763px;top:603px;width:79px;height:23px;border-right:1px solid #d4d4d4;border-bottom:1px solid #d4d4d4;"></div><div class="c" style="left:1843px;top:603px;width:50px;height:23px;border-right:1px solid #d4d4d4;border-bottom:1px solid #d4d4d4;"></div><div class="c" style="left:33px;top:627px;width:79px;height:23px;border-right:1px solid #d4d4d4;border-bottom:1px solid #d4d4d4;"><span class="cn" style="left:4px;">{64D4882D-AB12-4C3F-9E8D-7F6A5B4C3D2E}</span></div><div class="c" style="left:113px;top:627px;width:79px;height:23px;border-right:1px solid #d4d4d4;border-bottom:1px solid #d4d4d4;"><span class="cn" style="left:4px;">CoreShellHost</span></div><div class="c" style="left:193px;top:627px;width:79px;height:23px;border-right:1px solid #d4d4d4;border-bottom:1px solid #d4d4d4;"><span class="cn" style="left:4px;">Interactive User</span></div><div class="c" style="left:273px;top:627px;width:196px;height:23px;border-right:1px solid #d4d4d4;border-bottom:1px solid #d4d4d4;"><span class="cn" style="left:4px;">LocalLaunch. LocalActivation</span></div><div class="c" style="left:470px;top:627px;width:167px;height:23px;border-right:1px solid #d4d4d4;border-bottom:1px solid #d4d4d4;"><span class="cn" style="left:4px;">AccessAllowed</span></div><div class="c" style="left:638px;top:627px;width:167px;height:23px;border-right:1px solid #d4d4d4;border-bottom:1px solid #d4d4d4;"><span class="cn" style="left:4px;">NT AUTHORITY\LOCAL SERVICE</span></div><div class="c" style="left:806px;top:627px;width:125px;height:23px;border-right:1px solid #d4d4d4;border-bottom:1px solid #d4d4d4;"><span class="cn" style="left:4px;">S-1-5-19</span></div><div class="c" style="left:932px;top:627px;width:177px;height:23px;border-right:1px solid #d4d4d4;border-bottom:1px solid #d4d4d4;"><span class="cn" style="left:4px;">LocalAccess</span></div><div class="c" style="left:1110px;top:627px;width:127px;height:23px;border-right:1px solid #d4d4d4;border-bottom:1px solid #d4d4d4;"><span class="cn" style="left:4px;">AccessAllowed</span></div><div class="c" style="left:1238px;top:627px;width:132px;height:23px;border-right:1px solid #d4d4d4;border-bottom:1px solid #d4d4d4;"><span class="cn" style="left:4px;">NT AUTHORITY\LOCAL SERVICE</span></div><div class="c" style="left:1371px;top:627px;width:134px;height:23px;border-right:1px solid #d4d4d4;border-bottom:1px solid #d4d4d4;"><span class="cn" style="left:4px;">S-1-5-19</span></div><div class="c" style="left:1506px;top:627px;width:96px;height:23px;border-right:1px solid #d4d4d4;border-bottom:1px solid #d4d4d4;"></div><div class="c" style="left:1603px;top:627px;width:79px;height:23px;border-right:1px solid #d4d4d4;border-bottom:1px solid #d4d4d4;"></div><div class="c" style="left:1683px;top:627px;width:79px;height:23px;border-right:1px solid #d4d4d4;border-bottom:1px solid #d4d4d4;"></div><div class="c" style="left:1763px;top:627px;width:79px;height:23px;border-right:1px solid #d4d4d4;border-bottom:1px solid #d4d4d4;"></div><div class="c" style="left:1843px;top:627px;width:50px;height:23px;border-right:1px solid #d4d4d4;border-bottom:1px solid #d4d4d4;"></div><div class="c" style="left:33px;top:651px;width:79px;height:23px;border-right:1px solid #d4d4d4;border-bottom:1px solid #d4d4d4;"><span class="cn" style="left:4px;">{64D4882D-AB12-4C3F-9E8D-7F6A5B4C3D2E}</span></div><div class="c" style="left:113px;top:651px;width:79px;height:23px;border-right:1px solid #d4d4d4;border-bottom:1px solid #d4d4d4;"><span class="cn" style="left:4px;">CoreShellHost</span></div><div class="c" style="left:193px;top:651px;width:79px;height:23px;border-right:1px solid #d4d4d4;border-bottom:1px solid #d4d4d4;"><span class="cn" style="left:4px;">Interactive User</span></div><div class="c" style="left:273px;top:651px;width:196px;height:23px;border-right:1px solid #d4d4d4;border-bottom:1px solid #d4d4d4;"><span class="cn" style="left:4px;">LocalLaunch. LocalActivation</span></div><div class="c" style="left:470px;top:651px;width:167px;height:23px;border-right:1px solid #d4d4d4;border-bottom:1px solid #d4d4d4;"><span class="cn" style="left:4px;">AccessAllowed</span></div><div class="c" style="left:638px;top:651px;width:167px;height:23px;border-right:1px solid #d4d4d4;border-bottom:1px solid #d4d4d4;"><span class="cn" style="left:4px;"><i>ЦЕНТР ПАКЕТОВ ПРИЛОЖЕНИЙ</i></span></div><div class="c" style="left:806px;top:651px;width:125px;height:23px;border-right:1px solid #d4d4d4;border-bottom:1px solid #d4d4d4;"><span class="cn" style="left:4px;">S-1-15-2-1</span></div><div class="c" style="left:932px;top:651px;width:177px;height:23px;border-right:1px solid #d4d4d4;border-bottom:1px solid #d4d4d4;"><span class="cn" style="left:4px;">LocalAccess</span></div><div class="c" style="left:1110px;top:651px;width:127px;height:23px;border-right:1px solid #d4d4d4;border-bottom:1px solid #d4d4d4;"><span class="cn" style="left:4px;">AccessAllowed</span></div><div class="c" style="left:1238px;top:651px;width:132px;height:23px;border-right:1px solid #d4d4d4;border-bottom:1px solid #d4d4d4;"><span class="cn" style="left:4px;"><i>ЦЕНТР ПАКЕТОВ ПРИЛОЖЕНИЙ</i></span></div><div class="c" style="left:1371px;top:651px;width:134px;height:23px;border-right:1px solid #d4d4d4;border-bottom:1px solid #d4d4d4;"><span class="cn" style="left:4px;">S-1-15-2-1</span></div><div class="c" style="left:1506px;top:651px;width:96px;height:23px;border-right:1px solid #d4d4d4;border-bottom:1px solid #d4d4d4;"></div><div class="c" style="left:1603px;top:651px;width:79px;height:23px;border-right:1px solid #d4d4d4;border-bottom:1px solid #d4d4d4;"></div><div class="c" style="left:1683px;top:651px;width:79px;height:23px;border-right:1px solid #d4d4d4;border-bottom:1px solid #d4d4d4;"></div><div class="c" style="left:1763px;top:651px;width:79px;height:23px;border-right:1px solid #d4d4d4;border-bottom:1px solid #d4d4d4;"></div><div class="c" style="left:1843px;top:651px;width:50px;height:23px;border-right:1px solid #d4d4d4;border-bottom:1px solid #d4d4d4;"></div><div class="c" style="left:33px;top:675px;width:79px;height:23px;border-right:1px solid #d4d4d4;border-bottom:1px solid #d4d4d4;"><span class="cn" style="left:4px;">{64D4882D-AB12-4C3F-9E8D-7F6A5B4C3D2E}</span></div><div class="c" style="left:113px;top:675px;width:79px;height:23px;border-right:1px solid #d4d4d4;border-bottom:1px solid #d4d4d4;"><span class="cn" style="left:4px;">CoreShellHost</span></div><div class="c" style="left:193px;top:675px;width:79px;height:23px;border-right:1px solid #d4d4d4;border-bottom:1px solid #d4d4d4;"><span class="cn" style="left:4px;">Interactive User</span></div><div class="c" style="left:273px;top:675px;width:196px;height:23px;border-right:1px solid #d4d4d4;border-bottom:1px solid #d4d4d4;"><span class="cn" style="left:4px;">LocalLaunch. LocalActivation</span></div><div class="c" style="left:470px;top:675px;width:167px;height:23px;border-right:1px solid #d4d4d4;border-bottom:1px solid #d4d4d4;"><span class="cn" style="left:4px;">AccessAllowed</span></div><div class="c" style="left:638px;top:675px;width:167px;height:23px;border-right:1px solid #d4d4d4;border-bottom:1px solid #d4d4d4;"></div><div class="c" style="left:806px;top:675px;width:125px;height:23px;border-right:1px solid #d4d4d4;border-bottom:1px solid #d4d4d4;"><span class="cn" style="left:4px;">S-1-15-3-1024-1502825166-1963708345-2616377461-2562897074-4192028372-3161844548</span></div><div class="c" style="left:932px;top:675px;width:177px;height:23px;border-right:1px solid #d4d4d4;border-bottom:1px solid #d4d4d4;"><span class="cn" style="left:4px;">LocalAccess</span></div><div class="c" style="left:1110px;top:675px;width:127px;height:23px;border-right:1px solid #d4d4d4;border-bottom:1px solid #d4d4d4;"><span class="cn" style="left:4px;">AccessAllowed</span></div><div class="c" style="left:1238px;top:675px;width:132px;height:23px;border-right:1px solid #d4d4d4;border-bottom:1px solid #d4d4d4;"></div><div class="c" style="left:1371px;top:675px;width:522px;height:23px;border-right:1px solid #d4d4d4;border-bottom:1px solid #d4d4d4;"><span class="cn" style="left:4px;">S-1-15-3-1024-1502825166-1963708345-2616377461-2562897074-4192028372-3161844548</span></div><div class="c" style="left:33px;top:699px;width:79px;height:23px;border-right:1px solid #d4d4d4;border-bottom:1px solid #d4d4d4;"><span class="cn" style="left:4px;">{924DC564-16A6-42EB-929A-9A61FA7DA06F}</span></div><div class="c" style="left:113px;top:699px;width:79px;height:23px;border-right:1px solid #d4d4d4;border-bottom:1px solid #d4d4d4;"><span class="cn" style="left:4px;">AuthenticationUI</span></div><div class="c" style="left:193px;top:699px;width:79px;height:23px;border-right:1px solid #d4d4d4;border-bottom:1px solid #d4d4d4;"><span class="cn" style="left:4px;">Interactive User</span></div><div class="c" style="left:273px;top:699px;width:196px;height:23px;border-right:1px solid #d4d4d4;border-bottom:1px solid #d4d4d4;"><span class="cn" style="left:4px;">LocalLaunch. RemoteLaunch. LocalActivation</span></div><div class="c" style="left:470px;top:699px;width:167px;height:23px;border-right:1px solid #d4d4d4;border-bottom:1px solid #d4d4d4;"><span class="cn" style="left:4px;">AccessAllowed</span></div><div class="c" style="left:638px;top:699px;width:167px;height:23px;border-right:1px solid #d4d4d4;border-bottom:1px solid #d4d4d4;"><span class="cn" style="left:4px;">BUILTIN\<i>А</i>дминистраторы</span></div><div class="c" style="left:806px;top:699px;width:125px;height:23px;border-right:1px solid #d4d4d4;border-bottom:1px solid #d4d4d4;"><span class="cn" style="left:4px;">S-1-5-32-544</span></div><div class="c" style="left:932px;top:699px;width:177px;height:23px;border-right:1px solid #d4d4d4;border-bottom:1px solid #d4d4d4;"><span class="cn" style="left:4px;">LocalAccess. RemoteAccess</span></div><div class="c" style="left:1110px;top:699px;width:127px;height:23px;border-right:1px solid #d4d4d4;border-bottom:1px solid #d4d4d4;"><span class="cn" style="left:4px;">AccessAllowed</span></div><div class="c" style="left:1238px;top:699px;width:132px;height:23px;border-right:1px solid #d4d4d4;border-bottom:1px solid #d4d4d4;"><span class="cn" style="left:4px;">NT AUTHORITY\<i>СИСТЕМА</i></span></div><div class="c" style="left:1371px;top:699px;width:134px;height:23px;border-right:1px solid #d4d4d4;border-bottom:1px solid #d4d4d4;"><span class="cn" style="left:4px;">S-1-5-18</span></div><div class="c" style="left:1506px;top:699px;width:96px;height:23px;border-right:1px solid #d4d4d4;border-bottom:1px solid #d4d4d4;"></div><div class="c" style="left:1603px;top:699px;width:79px;height:23px;border-right:1px solid #d4d4d4;border-bottom:1px solid #d4d4d4;"></div><div class="c" style="left:1683px;top:699px;width:210px;height:23px;border-right:1px solid #d4d4d4;border-bottom:1px solid #d4d4d4;"><span class="cn" style="left:4px;">{924DC564-16A6-42EB-929A-9A61FA7DA06F}</span></div><div class="c" style="left:33px;top:723px;width:79px;height:23px;border-right:1px solid #d4d4d4;border-bottom:1px solid #d4d4d4;"><span class="cn" style="left:4px;">{924DC564-16A6-42EB-929A-9A61FA7DA06F}</span></div><div class="c" style="left:113px;top:723px;width:79px;height:23px;border-right:1px solid #d4d4d4;border-bottom:1px solid #d4d4d4;"><span class="cn" style="left:4px;">AuthenticationUI</span></div><div class="c" style="left:193px;top:723px;width:79px;height:23px;border-right:1px solid #d4d4d4;border-bottom:1px solid #d4d4d4;"><span class="cn" style="left:4px;">Interactive User</span></div><div class="c" style="left:273px;top:723px;width:196px;height:23px;border-right:1px solid #d4d4d4;border-bottom:1px solid #d4d4d4;"><span class="cn" style="left:4px;">LocalLaunch. RemoteLaunch. LocalActivation</span></div><div class="c" style="left:470px;top:723px;width:167px;height:23px;border-right:1px solid #d4d4d4;border-bottom:1px solid #d4d4d4;"><span class="cn" style="left:4px;">AccessAllowed</span></div><div class="c" style="left:638px;top:723px;width:167px;height:23px;border-right:1px solid #d4d4d4;border-bottom:1px solid #d4d4d4;"><span class="cn" style="left:4px;">NT AUTHORITY\<i>ИНТЕРАКТИВНЫЕ</i></span></div><div class="c" style="left:806px;top:723px;width:125px;height:23px;border-right:1px solid #d4d4d4;border-bottom:1px solid #d4d4d4;"><span class="cn" style="left:4px;">S-1-5-4</span></div><div class="c" style="left:932px;top:723px;width:177px;height:23px;border-right:1px solid #d4d4d4;border-bottom:1px solid #d4d4d4;"><span class="cn" style="left:4px;">LocalAccess. RemoteAccess</span></div><div class="c" style="left:1110px;top:723px;width:127px;height:23px;border-right:1px solid #d4d4d4;border-bottom:1px solid #d4d4d4;"><span class="cn" style="left:4px;">AccessAllowed</span></div><div class="c" style="left:1238px;top:723px;width:132px;height:23px;border-right:1px solid #d4d4d4;border-bottom:1px solid #d4d4d4;"><span class="cn" style="left:4px;">BUILTIN\<i>А</i>дминистраторы</span></div><div class="c" style="left:1371px;top:723px;width:134px;height:23px;border-right:1px solid #d4d4d4;border-bottom:1px solid #d4d4d4;"><span class="cn" style="left:4px;">S-1-5-32-544</span></div><div class="c" style="left:1506px;top:723px;width:96px;height:23px;border-right:1px solid #d4d4d4;border-bottom:1px solid #d4d4d4;"></div><div class="c" style="left:1603px;top:723px;width:79px;height:23px;border-right:1px solid #d4d4d4;border-bottom:1px solid #d4d4d4;"></div><div class="c" style="left:1683px;top:723px;width:210px;height:23px;border-right:1px solid #d4d4d4;border-bottom:1px solid #d4d4d4;"><span class="cn" style="left:4px;">{924DC564-16A6-42EB-929A-9A61FA7DA06F}</span></div><div class="c" style="left:33px;top:747px;width:79px;height:23px;border-right:1px solid #d4d4d4;border-bottom:1px solid #d4d4d4;"><span class="cn" style="left:4px;">{924DC564-16A6-42EB-929A-9A61FA7DA06F}</span></div><div class="c" style="left:113px;top:747px;width:79px;height:23px;border-right:1px solid #d4d4d4;border-bottom:1px solid #d4d4d4;"><span class="cn" style="left:4px;">AuthenticationUI</span></div><div class="c" style="left:193px;top:747px;width:79px;height:23px;border-right:1px solid #d4d4d4;border-bottom:1px solid #d4d4d4;"><span class="cn" style="left:4px;">Interactive User</span></div><div class="c" style="left:273px;top:747px;width:196px;height:23px;border-right:1px solid #d4d4d4;border-bottom:1px solid #d4d4d4;"><span class="cn" style="left:4px;">LocalLaunch. RemoteLaunch. LocalActivation</span></div><div class="c" style="left:470px;top:747px;width:167px;height:23px;border-right:1px solid #d4d4d4;border-bottom:1px solid #d4d4d4;"><span class="cn" style="left:4px;">AccessAllowed</span></div><div class="c" style="left:638px;top:747px;width:167px;height:23px;border-right:1px solid #d4d4d4;border-bottom:1px solid #d4d4d4;"><span class="cn" style="left:4px;">NT AUTHORITY\<i>СИСТЕМА</i></span></div><div class="c" style="left:806px;top:747px;width:125px;height:23px;border-right:1px solid #d4d4d4;border-bottom:1px solid #d4d4d4;"><span class="cn" style="left:4px;">S-1-5-18</span></div><div class="c" style="left:932px;top:747px;width:177px;height:23px;border-right:1px solid #d4d4d4;border-bottom:1px solid #d4d4d4;"><span class="cn" style="left:4px;">LocalAccess. RemoteAccess</span></div><div class="c" style="left:1110px;top:747px;width:127px;height:23px;border-right:1px solid #d4d4d4;border-bottom:1px solid #d4d4d4;"><span class="cn" style="left:4px;">AccessAllowed</span></div><div class="c" style="left:1238px;top:747px;width:132px;height:23px;border-right:1px solid #d4d4d4;border-bottom:1px solid #d4d4d4;"><span class="cn" style="left:4px;">NT AUTHORITY\SELF</span></div><div class="c" style="left:1371px;top:747px;width:134px;height:23px;border-right:1px solid #d4d4d4;border-bottom:1px solid #d4d4d4;"><span class="cn" style="left:4px;">S-1-5-10</span></div><div class="c" style="left:1506px;top:747px;width:96px;height:23px;border-right:1px solid #d4d4d4;border-bottom:1px solid #d4d4d4;"></div><div class="c" style="left:1603px;top:747px;width:79px;height:23px;border-right:1px solid #d4d4d4;border-bottom:1px solid #d4d4d4;"></div><div class="c" style="left:1683px;top:747px;width:210px;height:23px;border-right:1px solid #d4d4d4;border-bottom:1px solid #d4d4d4;"><span class="cn" style="left:4px;">{924DC564-16A6-42EB-929A-9A61FA7DA06F}</span></div><div class="c" style="left:33px;top:771px;width:79px;height:23px;border-right:1px solid #d4d4d4;border-bottom:1px solid #d4d4d4;"><span class="cn" style="left:4px;">{924DC564-16A6-42EB-929A-9A61FA7DA06F}</span></div><div class="c" style="left:113px;top:771px;width:79px;height:23px;border-right:1px solid #d4d4d4;border-bottom:1px solid #d4d4d4;"><span class="cn" style="left:4px;">AuthenticationUI</span></div><div class="c" style="left:193px;top:771px;width:79px;height:23px;border-right:1px solid #d4d4d4;border-bottom:1px solid #d4d4d4;"><span class="cn" style="left:4px;">Interactive User</span></div><div class="c" style="left:273px;top:771px;width:196px;height:23px;border-right:1px solid #d4d4d4;border-bottom:1px solid #d4d4d4;"><span class="cn" style="left:4px;">LocalLaunch. LocalActivation</span></div><div class="c" style="left:470px;top:771px;width:167px;height:23px;border-right:1px solid #d4d4d4;border-bottom:1px solid #d4d4d4;"><span class="cn" style="left:4px;">AccessAllowed</span></div><div class="c" style="left:638px;top:771px;width:167px;height:23px;border-right:1px solid #d4d4d4;border-bottom:1px solid #d4d4d4;"><span class="cn" style="left:4px;">NT AUTHORITY\<i>СЛУЖБА</i></span></div><div class="c" style="left:806px;top:771px;width:125px;height:23px;border-right:1px solid #d4d4d4;border-bottom:1px solid #d4d4d4;"><span class="cn" style="left:4px;">S-1-5-6</span></div><div class="c" style="left:932px;top:771px;width:177px;height:23px;border-right:1px solid #d4d4d4;border-bottom:1px solid #d4d4d4;"><span class="cn" style="left:4px;">LocalAccess. RemoteAccess</span></div><div class="c" style="left:1110px;top:771px;width:127px;height:23px;border-right:1px solid #d4d4d4;border-bottom:1px solid #d4d4d4;"><span class="cn" style="left:4px;">AccessAllowed</span></div><div class="c" style="left:1238px;top:771px;width:132px;height:23px;border-right:1px solid #d4d4d4;border-bottom:1px solid #d4d4d4;"><span class="cn" style="left:4px;">NT AUTHORITY\<i>СИСТЕМА</i></span></div><div class="c" style="left:1371px;top:771px;width:134px;height:23px;border-right:1px solid #d4d4d4;border-bottom:1px solid #d4d4d4;"><span class="cn" style="left:4px;">S-1-5-6</span></div><div class="c" style="left:1506px;top:771px;width:96px;height:23px;border-right:1px solid #d4d4d4;border-bottom:1px solid #d4d4d4;"></div><div class="c" style="left:1603px;top:771px;width:79px;height:23px;border-right:1px solid #d4d4d4;border-bottom:1px solid #d4d4d4;"></div><div class="c" style="left:1683px;top:771px;width:210px;height:23px;border-right:1px solid #d4d4d4;border-bottom:1px solid #d4d4d4;"><span class="cn" style="left:4px;">{924DC564-16A6-42EB-929A-9A61FA7DA06F}</span></div><div class="c" style="left:33px;top:795px;width:79px;height:23px;border-right:1px solid #d4d4d4;border-bottom:1px solid #d4d4d4;"><span class="cn" style="left:4px;">{924DC564-16A6-42EB-929A-9A61FA7DA06F}</span></div><div class="c" style="left:113px;top:795px;width:79px;height:23px;border-right:1px solid #d4d4d4;border-bottom:1px solid #d4d4d4;"><span class="cn" style="left:4px;">AuthenticationUI</span></div><div class="c" style="left:193px;top:795px;width:276px;height:23px;border-right:1px solid #d4d4d4;border-bottom:1px solid #d4d4d4;"><span class="cn" style="left:4px;">Interactive User</span></div><div class="c" style="left:470px;top:795px;width:167px;height:23px;border-right:1px solid #d4d4d4;border-bottom:1px solid #d4d4d4;"></div><div class="c" style="left:638px;top:795px;width:167px;height:23px;border-right:1px solid #d4d4d4;border-bottom:1px solid #d4d4d4;"></div><div class="c" style="left:806px;top:795px;width:125px;height:23px;border-right:1px solid #d4d4d4;border-bottom:1px solid #d4d4d4;"></div><div class="c" style="left:932px;top:795px;width:177px;height:23px;border-right:1px solid #d4d4d4;border-bottom:1px solid #d4d4d4;"><span class="cn" style="left:4px;">LocalAccess</span></div><div class="c" style="left:1110px;top:795px;width:127px;height:23px;border-right:1px solid #d4d4d4;border-bottom:1px solid #d4d4d4;"><span class="cn" style="left:4px;">AccessAllowed</span></div><div class="c" style="left:1238px;top:795px;width:132px;height:23px;border-right:1px solid #d4d4d4;border-bottom:1px solid #d4d4d4;"><span class="cn" style="left:4px;"><i>ЦЕНТР ПАКЕТОВ ПРИЛОЖЕНИЙ</i></span></div><div class="c" style="left:1371px;top:795px;width:134px;height:23px;border-right:1px solid #d4d4d4;border-bottom:1px solid #d4d4d4;"><span class="cn" style="left:4px;">S-1-15-2-1</span></div><div class="c" style="left:1506px;top:795px;width:96px;height:23px;border-right:1px solid #d4d4d4;border-bottom:1px solid #d4d4d4;"></div><div class="c" style="left:1603px;top:795px;width:79px;height:23px;border-right:1px solid #d4d4d4;border-bottom:1px solid #d4d4d4;"></div><div class="c" style="left:1683px;top:795px;width:210px;height:23px;border-right:1px solid #d4d4d4;border-bottom:1px solid #d4d4d4;"><span class="cn" style="left:4px;">{924DC564-16A6-42EB-929A-9A61FA7DA06F}</span></div><div class="c" style="left:33px;top:819px;width:79px;height:23px;border-right:1px solid #d4d4d4;border-bottom:1px solid #d4d4d4;"><span class="cn" style="left:4px;">{924DC564-16A6-42EB-929A-9A61FA7DA06F}</span></div><div class="c" style="left:113px;top:819px;width:79px;height:23px;border-right:1px solid #d4d4d4;border-bottom:1px solid #d4d4d4;"><span class="cn" style="left:4px;">AuthenticationUI</span></div><div class="c" style="left:193px;top:819px;width:276px;height:23px;border-right:1px solid #d4d4d4;border-bottom:1px solid #d4d4d4;"><span class="cn" style="left:4px;">Interactive User</span></div><div class="c" style="left:470px;top:819px;width:167px;height:23px;border-right:1px solid #d4d4d4;border-bottom:1px solid #d4d4d4;"></div><div class="c" style="left:638px;top:819px;width:167px;height:23px;border-right:1px solid #d4d4d4;border-bottom:1px solid #d4d4d4;"></div><div class="c" style="left:806px;top:819px;width:125px;height:23px;border-right:1px solid #d4d4d4;border-bottom:1px solid #d4d4d4;"></div><div class="c" style="left:932px;top:819px;width:177px;height:23px;border-right:1px solid #d4d4d4;border-bottom:1px solid #d4d4d4;"><span class="cn" style="left:4px;">LocalAccess</span></div><div class="c" style="left:1110px;top:819px;width:127px;height:23px;border-right:1px solid #d4d4d4;border-bottom:1px solid #d4d4d4;"><span class="cn" style="left:4px;">AccessAllowed</span></div><div class="c" style="left:1238px;top:819px;width:132px;height:23px;border-right:1px solid #d4d4d4;border-bottom:1px solid #d4d4d4;"></div><div class="c" style="left:1371px;top:819px;width:311px;height:23px;border-right:1px solid #d4d4d4;border-bottom:1px solid #d4d4d4;"><span class="cn" style="left:4px;">S-1-15-3-1024-1502825166-1963708345-2616377461-2562897074-4192028372-3161844548</span></div><div class="c" style="left:1683px;top:819px;width:210px;height:23px;border-right:1px solid #d4d4d4;border-bottom:1px solid #d4d4d4;"><span class="cn" style="left:4px;">{924DC564-16A6-42EB-929A-9A61FA7DA06F}</span></div><div class="c" style="left:33px;top:843px;width:79px;height:23px;border-right:1px solid #d4d4d4;border-bottom:1px solid #d4d4d4;"><span class="cn" style="left:4px;">{C3A34354-9D8E-4F7B-8C6D-5E4F3A2B1C0D}</span></div><div class="c" style="left:113px;top:843px;width:79px;height:23px;border-right:1px solid #d4d4d4;border-bottom:1px solid #d4d4d4;"><span class="cn" style="left:4px;">cttunesvr</span></div><div class="c" style="left:193px;top:843px;width:79px;height:23px;border-right:1px solid #d4d4d4;border-bottom:1px solid #d4d4d4;"><span class="cn" style="left:4px;">The Launching User</span></div><div class="c" style="left:273px;top:843px;width:196px;height:23px;border-right:1px solid #d4d4d4;border-bottom:1px solid #d4d4d4;"><span class="cn" style="left:4px;">LocalLaunch. RemoteLaunch. LocalActivation</span></div><div class="c" style="left:470px;top:843px;width:167px;height:23px;border-right:1px solid #d4d4d4;border-bottom:1px solid #d4d4d4;"><span class="cn" style="left:4px;">AccessAllowed</span></div><div class="c" style="left:638px;top:843px;width:167px;height:23px;border-right:1px solid #d4d4d4;border-bottom:1px solid #d4d4d4;"><span class="cn" style="left:4px;">NT AUTHORITY\<i>СИСТЕМА</i></span></div><div class="c" style="left:806px;top:843px;width:125px;height:23px;border-right:1px solid #d4d4d4;border-bottom:1px solid #d4d4d4;"><span class="cn" style="left:4px;">S-1-5-18</span></div><div class="c" style="left:932px;top:843px;width:177px;height:23px;border-right:1px solid #d4d4d4;border-bottom:1px solid #d4d4d4;"><span class="cn" style="left:4px;">LocalAccess</span></div><div class="c" style="left:1110px;top:843px;width:127px;height:23px;border-right:1px solid #d4d4d4;border-bottom:1px solid #d4d4d4;"><span class="cn" style="left:4px;">AccessAllowed</span></div><div class="c" style="left:1238px;top:843px;width:132px;height:23px;border-right:1px solid #d4d4d4;border-bottom:1px solid #d4d4d4;"><span class="cn" style="left:4px;">NT AUTHORITY\<i>СИСТЕМА</i></span></div><div class="c" style="left:1371px;top:843px;width:134px;height:23px;border-right:1px solid #d4d4d4;border-bottom:1px solid #d4d4d4;"><span class="cn" style="left:4px;">S-1-5-18</span></div><div class="c" style="left:1506px;top:843px;width:96px;height:23px;border-right:1px solid #d4d4d4;border-bottom:1px solid #d4d4d4;"></div><div class="c" style="left:1603px;top:843px;width:79px;height:23px;border-right:1px solid #d4d4d4;border-bottom:1px solid #d4d4d4;"></div><div class="c" style="left:1683px;top:843px;width:210px;height:23px;border-right:1px solid #d4d4d4;border-bottom:1px solid #d4d4d4;"><span class="cn" style="left:4px;">{32BA16FD-77D9-4AFB-9C9F-6B3F22C7AE4B}</span></div><div class="c" style="left:33px;top:867px;width:79px;height:23px;border-right:1px solid #d4d4d4;border-bottom:1px solid #d4d4d4;"><span class="cn" style="left:4px;">{C3A34354-9D8E-4F7B-8C6D-5E4F3A2B1C0D}</span></div><div class="c" style="left:113px;top:867px;width:79px;height:23px;border-right:1px solid #d4d4d4;border-bottom:1px solid #d4d4d4;"><span class="cn" style="left:4px;">cttunesvr</span></div><div class="c" style="left:193px;top:867px;width:79px;height:23px;border-right:1px solid #d4d4d4;border-bottom:1px solid #d4d4d4;"><span class="cn" style="left:4px;">The Launching User</span></div><div class="c" style="left:273px;top:867px;width:196px;height:23px;border-right:1px solid #d4d4d4;border-bottom:1px solid #d4d4d4;"><span class="cn" style="left:4px;">LocalLaunch. RemoteLaunch. LocalActivation</span></div><div class="c" style="left:470px;top:867px;width:167px;height:23px;border-right:1px solid #d4d4d4;border-bottom:1px solid #d4d4d4;"><span class="cn" style="left:4px;">AccessAllowed</span></div><div class="c" style="left:638px;top:867px;width:167px;height:23px;border-right:1px solid #d4d4d4;border-bottom:1px solid #d4d4d4;"><span class="cn" style="left:4px;">BUILTIN\<i>А</i>дминистраторы</span></div><div class="c" style="left:806px;top:867px;width:125px;height:23px;border-right:1px solid #d4d4d4;border-bottom:1px solid #d4d4d4;"><span class="cn" style="left:4px;">S-1-5-32-544</span></div><div class="c" style="left:932px;top:867px;width:177px;height:23px;border-right:1px solid #d4d4d4;border-bottom:1px solid #d4d4d4;"><span class="cn" style="left:4px;">LocalAccess. RemoteAccess</span></div><div class="c" style="left:1110px;top:867px;width:127px;height:23px;border-right:1px solid #d4d4d4;border-bottom:1px solid #d4d4d4;"><span class="cn" style="left:4px;">AccessAllowed</span></div><div class="c" style="left:1238px;top:867px;width:132px;height:23px;border-right:1px solid #d4d4d4;border-bottom:1px solid #d4d4d4;"><span class="cn" style="left:4px;">NT AUTHORITY\SELF</span></div><div class="c" style="left:1371px;top:867px;width:134px;height:23px;border-right:1px solid #d4d4d4;border-bottom:1px solid #d4d4d4;"><span class="cn" style="left:4px;">S-1-5-10</span></div><div class="c" style="left:1506px;top:867px;width:96px;height:23px;border-right:1px solid #d4d4d4;border-bottom:1px solid #d4d4d4;"></div><div class="c" style="left:1603px;top:867px;width:79px;height:23px;border-right:1px solid #d4d4d4;border-bottom:1px solid #d4d4d4;"></div><div class="c" style="left:1683px;top:867px;width:210px;height:23px;border-right:1px solid #d4d4d4;border-bottom:1px solid #d4d4d4;"><span class="cn" style="left:4px;">{32BA16FD-77D9-4AFB-9C9F-6B3F22C7AE4B}</span></div><div class="c" style="left:33px;top:891px;width:79px;height:23px;border-right:1px solid #d4d4d4;border-bottom:1px solid #d4d4d4;"><span class="cn" style="left:4px;">{C3A34354-9D8E-4F7B-8C6D-5E4F3A2B1C0D}</span></div><div class="c" style="left:113px;top:891px;width:79px;height:23px;border-right:1px solid #d4d4d4;border-bottom:1px solid #d4d4d4;"><span class="cn" style="left:4px;">cttunesvr</span></div><div class="c" style="left:193px;top:891px;width:79px;height:23px;border-right:1px solid #d4d4d4;border-bottom:1px solid #d4d4d4;"><span class="cn" style="left:4px;">The Launching User</span></div><div class="c" style="left:273px;top:891px;width:196px;height:23px;border-right:1px solid #d4d4d4;border-bottom:1px solid #d4d4d4;"><span class="cn" style="left:4px;">LocalLaunch. RemoteLaunch. LocalActivation</span></div><div class="c" style="left:470px;top:891px;width:167px;height:23px;border-right:1px solid #d4d4d4;border-bottom:1px solid #d4d4d4;"><span class="cn" style="left:4px;">AccessAllowed</span></div><div class="c" style="left:638px;top:891px;width:167px;height:23px;border-right:1px solid #d4d4d4;border-bottom:1px solid #d4d4d4;"><span class="cn" style="left:4px;">NT AUTHORITY\<i>ИНТЕРАКТИВНЫЕ</i></span></div><div class="c" style="left:806px;top:891px;width:125px;height:23px;border-right:1px solid #d4d4d4;border-bottom:1px solid #d4d4d4;"><span class="cn" style="left:4px;">S-1-5-4</span></div><div class="c" style="left:932px;top:891px;width:177px;height:23px;border-right:1px solid #d4d4d4;border-bottom:1px solid #d4d4d4;"><span class="cn" style="left:4px;">LocalAccess</span></div><div class="c" style="left:1110px;top:891px;width:127px;height:23px;border-right:1px solid #d4d4d4;border-bottom:1px solid #d4d4d4;"><span class="cn" style="left:4px;">AccessAllowed</span></div><div class="c" style="left:1238px;top:891px;width:132px;height:23px;border-right:1px solid #d4d4d4;border-bottom:1px solid #d4d4d4;"><span class="cn" style="left:4px;">NT AUTHORITY\<i>ИНТЕРАКТИВНЫЕ</i></span></div><div class="c" style="left:1371px;top:891px;width:134px;height:23px;border-right:1px solid #d4d4d4;border-bottom:1px solid #d4d4d4;"><span class="cn" style="left:4px;">S-1-5-4</span></div><div class="c" style="left:1506px;top:891px;width:96px;height:23px;border-right:1px solid #d4d4d4;border-bottom:1px solid #d4d4d4;"></div><div class="c" style="left:1603px;top:891px;width:79px;height:23px;border-right:1px solid #d4d4d4;border-bottom:1px solid #d4d4d4;"></div><div class="c" style="left:1683px;top:891px;width:210px;height:23px;border-right:1px solid #d4d4d4;border-bottom:1px solid #d4d4d4;"><span class="cn" style="left:4px;">{32BA16FD-77D9-4AFB-9C9F-6B3F22C7AE4B}</span></div><div class="c" style="left:33px;top:915px;width:79px;height:23px;border-right:1px solid #d4d4d4;border-bottom:1px solid #d4d4d4;"><span class="cn" style="left:4px;">{C3A34354-9D8E-4F7B-8C6D-5E4F3A2B1C0D}</span></div><div class="c" style="left:113px;top:915px;width:79px;height:23px;border-right:1px solid #d4d4d4;border-bottom:1px solid #d4d4d4;"><span class="cn" style="left:4px;">cttunesvr</span></div><div class="c" style="left:193px;top:915px;width:79px;height:23px;border-right:1px solid #d4d4d4;border-bottom:1px solid #d4d4d4;"><span class="cn" style="left:4px;">The Launching User</span></div><div class="c" style="left:273px;top:915px;width:196px;height:23px;border-right:1px solid #d4d4d4;border-bottom:1px solid #d4d4d4;"><span class="cn" style="left:4px;">LocalLaunch. LocalActivation</span></div><div class="c" style="left:470px;top:915px;width:167px;height:23px;border-right:1px solid #d4d4d4;border-bottom:1px solid #d4d4d4;"><span class="cn" style="left:4px;">AccessAllowed</span></div><div class="c" style="left:638px;top:915px;width:167px;height:23px;border-right:1px solid #d4d4d4;border-bottom:1px solid #d4d4d4;"><span class="cn" style="left:4px;">NT AUTHORITY\<i>СИСТЕМА</i></span></div><div class="c" style="left:806px;top:915px;width:125px;height:23px;border-right:1px solid #d4d4d4;border-bottom:1px solid #d4d4d4;"><span class="cn" style="left:4px;">S-1-5-18</span></div><div class="c" style="left:932px;top:915px;width:177px;height:23px;border-right:1px solid #d4d4d4;border-bottom:1px solid #d4d4d4;"></div><div class="c" style="left:1110px;top:915px;width:127px;height:23px;border-right:1px solid #d4d4d4;border-bottom:1px solid #d4d4d4;"></div><div class="c" style="left:1238px;top:915px;width:132px;height:23px;border-right:1px solid #d4d4d4;border-bottom:1px solid #d4d4d4;"></div><div class="c" style="left:1371px;top:915px;width:134px;height:23px;border-right:1px solid #d4d4d4;border-bottom:1px solid #d4d4d4;"></div><div class="c" style="left:1506px;top:915px;width:96px;height:23px;border-right:1px solid #d4d4d4;border-bottom:1px solid #d4d4d4;"></div><div class="c" style="left:1603px;top:915px;width:79px;height:23px;border-right:1px solid #d4d4d4;border-bottom:1px solid #d4d4d4;"></div><div class="c" style="left:1683px;top:915px;width:210px;height:23px;border-right:1px solid #d4d4d4;border-bottom:1px solid #d4d4d4;"><span class="cn" style="left:4px;">{32BA16FD-77D9-4AFB-9C9F-6B3F22C7AE4B}</span></div><div class="c" style="left:33px;top:939px;width:79px;height:23px;border-right:1px solid #d4d4d4;border-bottom:1px solid #d4d4d4;"><span class="cn" style="left:4px;">{C2E9756F-1A2B-4C3D-8E9F-0A1B2C3D4E5F}</span></div><div class="c" style="left:113px;top:939px;width:79px;height:23px;border-right:1px solid #d4d4d4;border-bottom:1px solid #d4d4d4;"><span class="cn" style="left:4px;">DataExchangeHost</span></div><div class="c" style="left:193px;top:939px;width:79px;height:23px;border-right:1px solid #d4d4d4;border-bottom:1px solid #d4d4d4;"><span class="cn" style="left:4px;">Interactive User</span></div><div class="c" style="left:273px;top:939px;width:196px;height:23px;border-right:1px solid #d4d4d4;border-bottom:1px solid #d4d4d4;"><span class="cn" style="left:4px;">LocalLaunch. LocalActivation</span></div><div class="c" style="left:470px;top:939px;width:167px;height:23px;border-right:1px solid #d4d4d4;border-bottom:1px solid #d4d4d4;"><span class="cn" style="left:4px;">AccessAllowed</span></div><div class="c" style="left:638px;top:939px;width:167px;height:23px;border-right:1px solid #d4d4d4;border-bottom:1px solid #d4d4d4;"><span class="cn" style="left:4px;">NT AUTHORITY\SELF</span></div><div class="c" style="left:806px;top:939px;width:125px;height:23px;border-right:1px solid #d4d4d4;border-bottom:1px solid #d4d4d4;"><span class="cn" style="left:4px;">S-1-5-10</span></div><div class="c" style="left:932px;top:939px;width:177px;height:23px;border-right:1px solid #d4d4d4;border-bottom:1px solid #d4d4d4;"><span class="cn" style="left:4px;">LocalAccess</span></div><div class="c" style="left:1110px;top:939px;width:127px;height:23px;border-right:1px solid #d4d4d4;border-bottom:1px solid #d4d4d4;"><span class="cn" style="left:4px;">AccessAllowed</span></div><div class="c" style="left:1238px;top:939px;width:132px;height:23px;border-right:1px solid #d4d4d4;border-bottom:1px solid #d4d4d4;"><span class="cn" style="left:4px;">NT AUTHORITY\SELF</span></div><div class="c" style="left:1371px;top:939px;width:134px;height:23px;border-right:1px solid #d4d4d4;border-bottom:1px solid #d4d4d4;"><span class="cn" style="left:4px;">S-1-5-10</span></div><div class="c" style="left:1506px;top:939px;width:96px;height:23px;border-right:1px solid #d4d4d4;border-bottom:1px solid #d4d4d4;"></div><div class="c" style="left:1603px;top:939px;width:79px;height:23px;border-right:1px solid #d4d4d4;border-bottom:1px solid #d4d4d4;"></div><div class="c" style="left:1683px;top:939px;width:79px;height:23px;border-right:1px solid #d4d4d4;border-bottom:1px solid #d4d4d4;"></div><div class="c" style="left:1763px;top:939px;width:79px;height:23px;border-right:1px solid #d4d4d4;border-bottom:1px solid #d4d4d4;"></div><div class="c" style="left:1843px;top:939px;width:50px;height:23px;border-right:1px solid #d4d4d4;border-bottom:1px solid #d4d4d4;"></div><div class="c" style="left:33px;top:963px;width:79px;height:23px;border-right:1px solid #d4d4d4;border-bottom:1px solid #d4d4d4;"><span class="cn" style="left:4px;">{C2E9756F-1A2B-4C3D-8E9F-0A1B2C3D4E5F}</span></div><div class="c" style="left:113px;top:963px;width:79px;height:23px;border-right:1px solid #d4d4d4;border-bottom:1px solid #d4d4d4;"><span class="cn" style="left:4px;">DataExchangeHost</span></div><div class="c" style="left:193px;top:963px;width:79px;height:23px;border-right:1px solid #d4d4d4;border-bottom:1px solid #d4d4d4;"><span class="cn" style="left:4px;">Interactive User</span></div><div class="c" style="left:273px;top:963px;width:196px;height:23px;border-right:1px solid #d4d4d4;border-bottom:1px solid #d4d4d4;"><span class="cn" style="left:4px;">LocalLaunch. LocalActivation</span></div><div class="c" style="left:470px;top:963px;width:167px;height:23px;border-right:1px solid #d4d4d4;border-bottom:1px solid #d4d4d4;"><span class="cn" style="left:4px;">AccessAllowed</span></div><div class="c" style="left:638px;top:963px;width:167px;height:23px;border-right:1px solid #d4d4d4;border-bottom:1px solid #d4d4d4;"><span class="cn" style="left:4px;"><i>ЦЕНТР ПАКЕТОВ ПРИЛОЖЕНИЙ</i></span></div><div class="c" style="left:806px;top:963px;width:125px;height:23px;border-right:1px solid #d4d4d4;border-bottom:1px solid #d4d4d4;"><span class="cn" style="left:4px;">S-1-15-2-1</span></div><div class="c" style="left:932px;top:963px;width:177px;height:23px;border-right:1px solid #d4d4d4;border-bottom:1px solid #d4d4d4;"><span class="cn" style="left:4px;">LocalAccess</span></div><div class="c" style="left:1110px;top:963px;width:127px;height:23px;border-right:1px solid #d4d4d4;border-bottom:1px solid #d4d4d4;"><span class="cn" style="left:4px;">AccessAllowed</span></div><div class="c" style="left:1238px;top:963px;width:132px;height:23px;border-right:1px solid #d4d4d4;border-bottom:1px solid #d4d4d4;"><span class="cn" style="left:4px;">NT AUTHORITY\<i>СИСТЕМА</i></span></div><div class="c" style="left:1371px;top:963px;width:134px;height:23px;border-right:1px solid #d4d4d4;border-bottom:1px solid #d4d4d4;"><span class="cn" style="left:4px;">S-1-5-18</span></div><div class="c" style="left:1506px;top:963px;width:96px;height:23px;border-right:1px solid #d4d4d4;border-bottom:1px solid #d4d4d4;"></div><div class="c" style="left:1603px;top:963px;width:79px;height:23px;border-right:1px solid #d4d4d4;border-bottom:1px solid #d4d4d4;"></div><div class="c" style="left:1683px;top:963px;width:79px;height:23px;border-right:1px solid #d4d4d4;border-bottom:1px solid #d4d4d4;"></div><div class="c" style="left:1763px;top:963px;width:79px;height:23px;border-right:1px solid #d4d4d4;border-bottom:1px solid #d4d4d4;"></div><div class="c" style="left:1843px;top:963px;width:50px;height:23px;border-right:1px solid #d4d4d4;border-bottom:1px solid #d4d4d4;"></div><div class="c" style="left:33px;top:987px;width:79px;height:23px;border-right:1px solid #d4d4d4;border-bottom:1px solid #d4d4d4;"><span class="cn" style="left:4px;">{C2E9756F-1A2B-4C3D-8E9F-0A1B2C3D4E5F}</span></div><div class="c" style="left:113px;top:987px;width:79px;height:23px;border-right:1px solid #d4d4d4;border-bottom:1px solid #d4d4d4;"><span class="cn" style="left:4px;">DataExchangeHost</span></div><div class="c" style="left:193px;top:987px;width:79px;height:23px;border-right:1px solid #d4d4d4;border-bottom:1px solid #d4d4d4;"><span class="cn" style="left:4px;">Interactive User</span></div><div class="c" style="left:273px;top:987px;width:196px;height:23px;border-right:1px solid #d4d4d4;border-bottom:1px solid #d4d4d4;"><span class="cn" style="left:4px;">LocalLaunch. LocalActivation</span></div><div class="c" style="left:470px;top:987px;width:167px;height:23px;border-right:1px solid #d4d4d4;border-bottom:1px solid #d4d4d4;"><span class="cn" style="left:4px;">AccessAllowed</span></div><div class="c" style="left:638px;top:987px;width:167px;height:23px;border-right:1px solid #d4d4d4;border-bottom:1px solid #d4d4d4;"></div><div class="c" style="left:806px;top:987px;width:125px;height:23px;border-right:1px solid #d4d4d4;border-bottom:1px solid #d4d4d4;"><span class="cn" style="left:4px;">S-1-15-3-1024-1502825166-1963708345-2616377461-2562897074-4192028372-3161844548</span></div><div class="c" style="left:932px;top:987px;width:177px;height:23px;border-right:1px solid #d4d4d4;border-bottom:1px solid #d4d4d4;"><span class="cn" style="left:4px;">LocalAccess</span></div><div class="c" style="left:1110px;top:987px;width:127px;height:23px;border-right:1px solid #d4d4d4;border-bottom:1px solid #d4d4d4;"><span class="cn" style="left:4px;">AccessAllowed</span></div><div class="c" style="left:1238px;top:987px;width:132px;height:23px;border-right:1px solid #d4d4d4;border-bottom:1px solid #d4d4d4;"><span class="cn" style="left:4px;"><i>ЦЕНТР ПАКЕТОВ ПРИЛОЖЕНИЙ</i></span></div><div class="c" style="left:1371px;top:987px;width:134px;height:23px;border-right:1px solid #d4d4d4;border-bottom:1px solid #d4d4d4;"><span class="cn" style="left:4px;">S-1-15-2-1</span></div><div class="c" style="left:1506px;top:987px;width:96px;height:23px;border-right:1px solid #d4d4d4;border-bottom:1px solid #d4d4d4;"></div><div class="c" style="left:1603px;top:987px;width:79px;height:23px;border-right:1px solid #d4d4d4;border-bottom:1px solid #d4d4d4;"></div><div class="c" style="left:1683px;top:987px;width:79px;height:23px;border-right:1px solid #d4d4d4;border-bottom:1px solid #d4d4d4;"></div><div class="c" style="left:1763px;top:987px;width:79px;height:23px;border-right:1px solid #d4d4d4;border-bottom:1px solid #d4d4d4;"></div><div class="c" style="left:1843px;top:987px;width:50px;height:23px;border-right:1px solid #d4d4d4;border-bottom:1px solid #d4d4d4;"></div><div class="c" style="left:33px;top:1011px;width:79px;height:23px;border-right:1px solid #d4d4d4;border-bottom:1px solid #d4d4d4;"></div><div class="c" style="left:113px;top:1011px;width:79px;height:23px;border-right:1px solid #d4d4d4;border-bottom:1px solid #d4d4d4;"></div><div class="c" style="left:193px;top:1011px;width:79px;height:23px;border-right:1px solid #d4d4d4;border-bottom:1px solid #d4d4d4;"></div><div class="c" style="left:273px;top:1011px;width:196px;height:23px;border-right:1px solid #d4d4d4;border-bottom:1px solid #d4d4d4;"></div><div class="c" style="left:470px;top:1011px;width:167px;height:23px;border-right:1px solid #d4d4d4;border-bottom:1px solid #d4d4d4;"></div><div class="c" style="left:638px;top:1011px;width:167px;height:23px;border-right:1px solid #d4d4d4;border-bottom:1px solid #d4d4d4;"></div><div class="c" style="left:806px;top:1011px;width:125px;height:23px;border-right:1px solid #d4d4d4;border-bottom:1px solid #d4d4d4;"></div><div class="c" style="left:932px;top:1011px;width:177px;height:23px;border-right:1px solid #d4d4d4;border-bottom:1px solid #d4d4d4;"></div><div class="c" style="left:1110px;top:1011px;width:127px;height:23px;border-right:1px solid #d4d4d4;border-bottom:1px solid #d4d4d4;"></div><div class="c" style="left:1238px;top:1011px;width:132px;height:23px;border-right:1px solid #d4d4d4;border-bottom:1px solid #d4d4d4;"></div><div class="c" style="left:1371px;top:1011px;width:134px;height:23px;border-right:1px solid #d4d4d4;border-bottom:1px solid #d4d4d4;"></div><div class="c" style="left:1506px;top:1011px;width:96px;height:23px;border-right:1px solid #d4d4d4;border-bottom:1px solid #d4d4d4;"></div><div class="c" style="left:1603px;top:1011px;width:79px;height:23px;border-right:1px solid #d4d4d4;border-bottom:1px solid #d4d4d4;"></div><div class="c" style="left:1683px;top:1011px;width:79px;height:23px;border-right:1px solid #d4d4d4;border-bottom:1px solid #d4d4d4;"></div><div class="c" style="left:1763px;top:1011px;width:79px;height:23px;border-right:1px solid #d4d4d4;border-bottom:1px solid #d4d4d4;"></div><div class="c" style="left:1843px;top:1011px;width:50px;height:23px;border-right:1px solid #d4d4d4;border-bottom:1px solid #d4d4d4;"></div></div><div class="r" style="left:31px;top:313px;width:2px;height:27px;background:#5e6560;"></div><div class="r" style="left:31px;top:313px;width:83px;height:2px;background:#5e6560;"></div><div class="r" style="left:112px;top:313px;width:2px;height:24px;background:#5e6560;"></div><div class="r" style="left:31px;top:338px;width:79px;height:2px;background:#5e6560;"></div><div class="r" style="left:110px;top:336px;width:5px;height:5px;background:#5e6560;"></div><div class="r" style="left:1894px;top:291px;width:25px;height:726px;background:#262626;"></div><div class="r" style="left:1897px;top:293px;width:19px;height:705px;background:#0a0a0a;"></div><div class="r" style="left:1897px;top:293px;width:19px;height:18px;background:#333333;box-sizing:border-box;border:1px solid #5a5f5b;"></div><svg class="r" style="left:1901px;top:297px;" width="11" height="8" viewBox="0 0 11 8"><path d="M0.5 7.5 L5.5 1 L10.5 7.5 Z" fill="#ffffff"/></svg><div class="r" style="left:1897px;top:312px;width:19px;height:21px;background:#333333;box-sizing:border-box;border:1px solid #5a5f5b;"></div><svg class="r" style="left:1884px;top:575px;" width="17" height="17" viewBox="0 0 17 17"><path d="M6 1.5 H10.5 V6 H15 V10.5 H10.5 V15 H6 V10.5 H1.5 V6 H6 Z" fill="#ffffff" stroke="#000" stroke-width="1.6"/><path d="M7 16 H11.5 V11.5 H16" fill="none" stroke="#000" stroke-width="1.3"/></svg><div class="r" style="left:1897px;top:998px;width:19px;height:19px;background:#333333;box-sizing:border-box;border:1px solid #5a5f5b;"></div><svg class="r" style="left:1901px;top:1004px;" width="11" height="8" viewBox="0 0 11 8"><path d="M0.5 0.5 L5.5 7 L10.5 0.5 Z" fill="#ffffff"/></svg><div class="r" style="left:0px;top:1016px;width:1919px;height:29px;background:#262626;"></div><svg class="r" style="left:26px;top:1025px;" width="8" height="11" viewBox="0 0 8 11"><path d="M7 0.5 V10.5 L1 5.5 Z" fill="#8a8a8a"/></svg><svg class="r" style="left:54px;top:1025px;" width="8" height="11" viewBox="0 0 8 11"><path d="M1 0.5 V10.5 L7 5.5 Z" fill="#d0d0d0"/></svg><div class="r" style="left:102px;top:1016px;width:73px;height:24px;background:#ffffff;"></div><div class="r" style="left:102px;top:1039px;width:73px;height:2px;background:#5e6560;"></div><div class="t" style="left:114.0px;top:1019.5px;font-size:16px;line-height:16px;color:#4f5650;font-weight:700;letter-spacing:-0.05px;">Лист1</div><svg class="r" style="left:207px;top:1020px;" width="22" height="22" viewBox="0 0 22 22"><circle cx="11" cy="11" r="9.8" fill="none" stroke="#dedede" stroke-width="1.4"/><path d="M11 6 V16 M6 11 H16" stroke="#ffffff" stroke-width="2"/></svg><div class="r" style="left:1148px;top:1024px;width:2.5px;height:2.5px;background:#ffffff;"></div><div class="r" style="left:1148px;top:1029.5px;width:2.5px;height:2.5px;background:#ffffff;"></div><div class="r" style="left:1148px;top:1035px;width:2.5px;height:2.5px;background:#ffffff;"></div><div class="r" style="left:1166px;top:1021px;width:19px;height:19px;background:#333333;box-sizing:border-box;border:1px solid #5a5f5b;"></div><svg class="r" style="left:1171px;top:1025px;" width="8" height="11" viewBox="0 0 8 11"><path d="M6.5 0.5 V10.5 L1 5.5 Z" fill="#ffffff"/></svg><div class="r" style="left:1184px;top:1021px;width:645px;height:19px;background:#333333;box-sizing:border-box;border:1px solid #5a5f5b;"></div><div class="r" style="left:1829px;top:1021px;width:46px;height:19px;background:#0a0a0a;"></div><div class="r" style="left:1875px;top:1021px;width:19px;height:19px;background:#333333;box-sizing:border-box;border:1px solid #5a5f5b;"></div><svg class="r" style="left:1881px;top:1025px;" width="8" height="11" viewBox="0 0 8 11"><path d="M1.5 0.5 V10.5 L7 5.5 Z" fill="#ffffff"/></svg><div class="r" style="left:0px;top:1045px;width:1919px;height:28px;background:#262626;"></div><div class="r" style="left:0px;top:1045px;width:1919px;height:1px;background:#3a3a3a;"></div><div class="t" style="left:13.0px;top:1052.6px;font-size:13.5px;line-height:13.5px;color:#e8e8e8;letter-spacing:0.06px;">Готово</div><svg class="r" style="left:79px;top:1050px;" width="21" height="20" viewBox="0 0 21 20"><path d="M8 2 A7.5 7.5 0 0 0 4 15" fill="none" stroke="#d8d8d8" stroke-width="1.3" stroke-dasharray="2 1.5"/><path d="M10 1 V8 M7.5 5.5 L10 8 L12.5 5.5 M14 6 H19 M17 4 L19 6 L17 8" stroke="#e8e8e8" stroke-width="1.3" fill="none"/><path d="M8 13 L12 17.5 L19.5 9" stroke="#f0f0f0" stroke-width="2" fill="none"/></svg><div class="t" style="left:101.0px;top:1052.6px;font-size:13.5px;line-height:13.5px;color:#e8e8e8;letter-spacing:-0.29px;">Специальные возможности: все в порядке</div><svg class="r" style="left:1342px;top:1049px;" width="22" height="21" viewBox="0 0 22 21"><rect x="1" y="1" width="17" height="13" fill="#d8d8d8"/><rect x="1" y="14" width="17" height="3" fill="#8a8a8a"/><circle cx="15" cy="15" r="4.5" fill="#d8d8d8" stroke="#262626" stroke-width="1.3"/><circle cx="15" cy="15" r="1.5" fill="#262626"/></svg><div class="t" style="left:1365.0px;top:1052.6px;font-size:13.5px;line-height:13.5px;color:#e8e8e8;letter-spacing:-0.20px;">Параметры отображения</div><div class="r" style="left:1543px;top:1046px;width:50px;height:25px;background:#3f3f3f;"></div><svg class="r" style="left:1559px;top:1050px;" width="18" height="18" viewBox="0 0 18 18"><rect x="1" y="1" width="16" height="16" fill="none" stroke="#f0f0f0" stroke-width="1.3"/><path d="M6.3 1 V17 M11.6 1 V17 M1 6.3 H17 M1 11.6 H17" stroke="#f0f0f0" stroke-width="1.3"/></svg><svg class="r" style="left:1608px;top:1050px;" width="19" height="18" viewBox="0 0 19 18"><rect x="1" y="1" width="17" height="16" fill="none" stroke="#f0f0f0" stroke-width="1.3"/><rect x="4" y="3.5" width="11" height="11" fill="none" stroke="#f0f0f0" stroke-width="1"/><path d="M6 6.5 H13 M6 9 H13 M6 11.5 H13" stroke="#f0f0f0" stroke-width="1"/></svg><svg class="r" style="left:1658px;top:1050px;" width="19" height="18" viewBox="0 0 19 18"><rect x="1" y="1" width="17" height="16" fill="none" stroke="#f0f0f0" stroke-width="1.3"/><rect x="2" y="2" width="4" height="9" fill="#f0f0f0"/><rect x="8" y="2" width="4" height="9" fill="#f0f0f0"/><rect x="2" y="11" width="4" height="5" fill="#3a3a3a"/></svg><div class="r" style="left:1700px;top:1058px;width:12px;height:1.3px;background:#e0e0e0;"></div><div class="r" style="left:1716px;top:1058.5px;width:125px;height:1px;background:#e0e0e0;"></div><div class="r" style="left:1777px;top:1052px;width:5px;height:14px;background:#ffffff;"></div><svg class="r" style="left:1846px;top:1052px;" width="12" height="12" viewBox="0 0 12 12"><path d="M6 1 V11 M1 6 H11" stroke="#e0e0e0" stroke-width="1.3"/></svg><div class="t" style="left:1873.5px;top:1053.2px;font-size:12.5px;line-height:12.5px;color:#e0e0e0;letter-spacing:-0.24px;">100 %</div><div class="t" style="left:671.5px;top:343.7px;font-size:197px;line-height:197px;font-weight:700;color:rgba(190,223,193,0.7);transform:scale(1.0,1.0);transform-origin:0 166.8px;">X</div><div class="t" style="left:802.1px;top:343.7px;font-size:197px;line-height:197px;font-weight:700;color:rgba(190,223,193,0.7);transform:scale(0.91,1.0);transform-origin:0 166.8px;">S</div><div class="t" style="left:927.1px;top:343.7px;font-size:197px;line-height:197px;font-weight:700;color:rgba(190,223,193,0.7);transform:scale(0.91,1.0);transform-origin:0 166.8px;">S</div><div class="t" style="left:1148.8px;top:343.7px;font-size:197px;line-height:197px;font-weight:700;color:rgba(190,223,193,0.7);transform:scale(0.965,0.945);transform-origin:0 166.8px;">s</div><div class="r" style="left:1060px;top:484px;width:26.5px;height:26px;background:rgba(190,223,193,0.7);"></div><div class="r" style="left:1112.4px;top:376px;width:25.5px;height:23.5px;background:rgba(190,223,193,0.7);"></div><div class="r" style="left:1112.4px;top:412.5px;width:25.5px;height:97.8px;background:rgba(190,223,193,0.7);"></div></body></html>
